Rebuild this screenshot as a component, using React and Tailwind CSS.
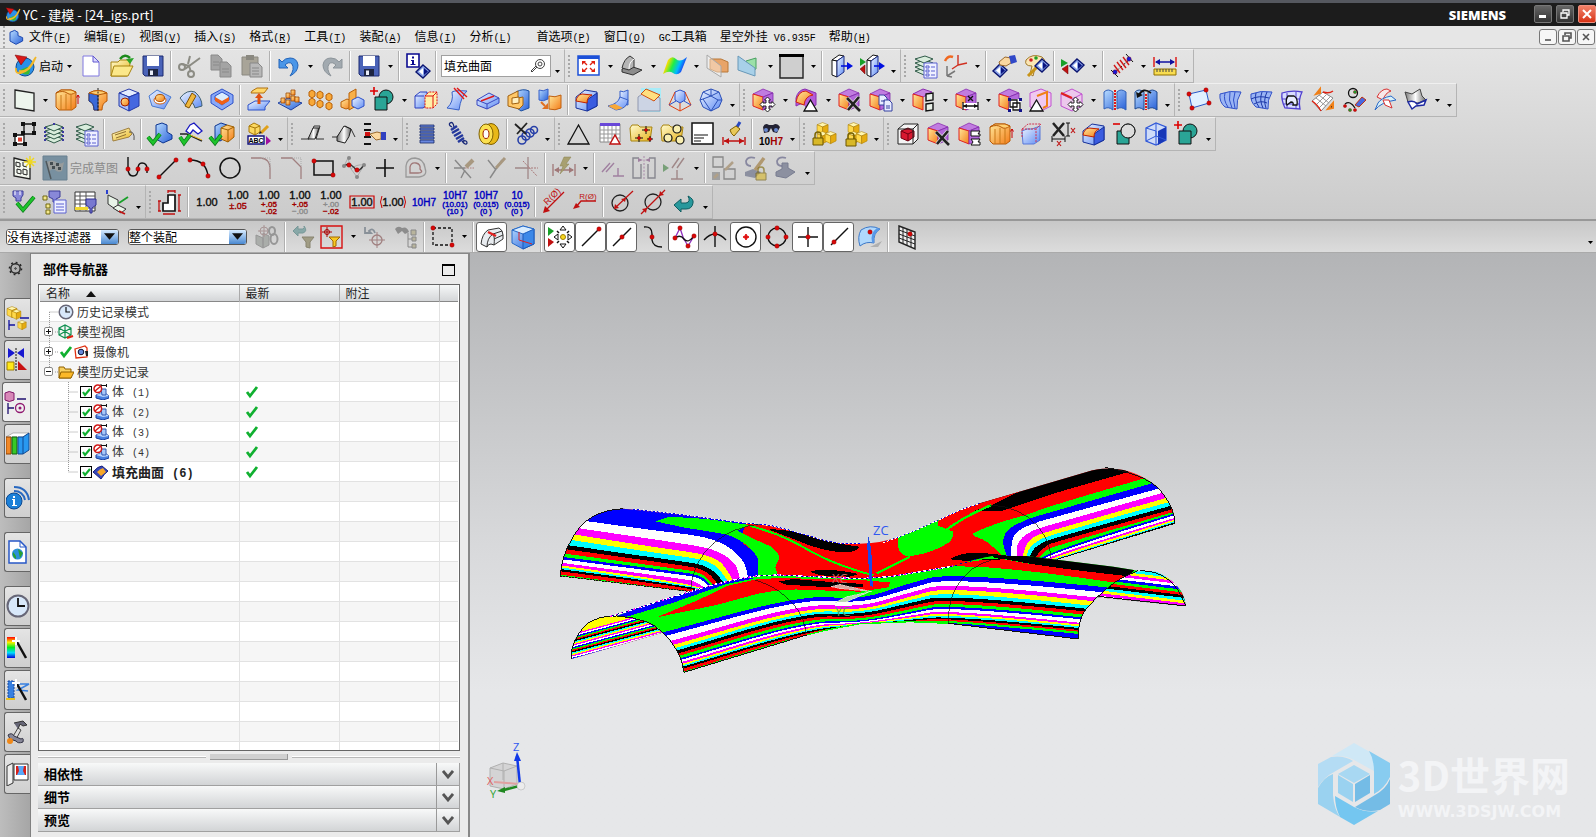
import React from 'react';

// ---------- Shared drawing parts ----------

const Gradients = () => (
  <svg width="0" height="0" className="absolute" aria-hidden="true">
    <defs>
      <linearGradient id="gBlue" x1="0" y1="0" x2="1" y2="1">
        <stop offset="0" stopColor="#f0f6ff" />
        <stop offset="1" stopColor="#5f8cf4" />
      </linearGradient>
      <linearGradient id="gDeep" x1="0" y1="0" x2="1" y2="1">
        <stop offset="0" stopColor="#b8dcff" />
        <stop offset="1" stopColor="#2860d8" />
      </linearGradient>
      <linearGradient id="gOrange" x1="0" y1="0" x2="1" y2="1">
        <stop offset="0" stopColor="#ffe89a" />
        <stop offset="1" stopColor="#f47c18" />
      </linearGradient>
      <linearGradient id="gGold" x1="0" y1="0" x2="1" y2="1">
        <stop offset="0" stopColor="#fffbd0" />
        <stop offset="1" stopColor="#e8b41c" />
      </linearGradient>
      <linearGradient id="gSilver" x1="0" y1="0" x2="1" y2="0">
        <stop offset="0" stopColor="#777" />
        <stop offset="0.5" stopColor="#fff" />
        <stop offset="1" stopColor="#666" />
      </linearGradient>
      <linearGradient id="gRainbow" x1="0" y1="0" x2="1" y2="0.3">
        <stop offset="0" stopColor="#f22" />
        <stop offset="0.25" stopColor="#fd0" />
        <stop offset="0.5" stopColor="#2e4" />
        <stop offset="0.75" stopColor="#0bf" />
        <stop offset="1" stopColor="#22e" />
      </linearGradient>
      <linearGradient id="gSpectrum" x1="0" y1="0" x2="0" y2="1">
        <stop offset="0" stopColor="#f00" />
        <stop offset="0.25" stopColor="#fe0" />
        <stop offset="0.5" stopColor="#0e2" />
        <stop offset="0.75" stopColor="#0df" />
        <stop offset="1" stopColor="#00d" />
      </linearGradient>
    </defs>
  </svg>
);

const Dot = ({ x, y, r = 2.2, c = '#d80808' }) => <circle cx={x} cy={y} r={r} fill={c} stroke="#800" strokeWidth="0.4" />;

const Cube = ({ t = '#e4ecff', l = '#a8c0fa', r = '#4668e0', s = '#2438a8', ...rest }) => (
  <g stroke={s} strokeWidth="1" strokeLinejoin="round" {...rest}>
    <path d="M12 1 22 5 12 9 2 5z" fill={t} />
    <path d="M2 5 12 9V23L2 18z" fill={l} />
    <path d="M12 9 22 5V18L12 23z" fill={r} />
  </g>
);

const EditCube = ({ children }) => (
  <>
    <path d="M11 1 21 5 11 9 1 6z" fill="#c07ce0" stroke="#8a2cb0" strokeWidth="0.8" />
    <path d="M1 6 11 9V22L1 18z" fill="url(#gOrange)" stroke="#e02020" />
    <path d="M11 9 21 5V18L11 22z" fill="#b468dc" stroke="#7d28a8" strokeWidth="0.8" />
    {children}
  </>
);

const Check = ({ d = 'M3 13 8 19 21 5', w = 4 }) => (
  <>
    <path d={d} fill="none" stroke="#0a7a18" strokeWidth={w} />
    <path d={d} fill="none" stroke="#1ec42c" strokeWidth={w - 1.4} />
  </>
);

const Cross = ({ x = 8, y = 9 }) => (
  <g transform={`translate(${x} ${y})`} stroke="#222" strokeWidth="2.6">
    <path d="M1 1 14 14M13 0 2 13" stroke="#ddd" strokeWidth="4" />
    <path d="M1 1 14 14M13 0 2 13" />
  </g>
);

const MoveCross = ({ x = 8, y = 9 }) => (
  <path
    transform={`translate(${x} ${y})`}
    d="M7.500 0 10.500 3H9V6H12V4.500L15 7.500 12 10.500V9H9V12H10.500L7.500 15 4.500 12H6V9H3V10.500L0 7.500 3 4.500V6H6V3H4.500z"
    fill="#fff"
    stroke="#222"
  />
);

const Diamond = ({ x = 0, y = 0 }) => (
  <g transform={`translate(${x} ${y})`}>
    <path d="M7 0 14 6 7 13 0 7z" fill="#8aa4e8" stroke="#0a1470" strokeWidth="1.4" />
    <path d="M7 3V10L3 6.500z" fill="#fff" />
    <path d="M8 3V10L12 6.500z" fill="#0a1480" />
  </g>
);

const Floppy = () => (
  <>
    <path d="M2 2H22V22H4L2 20z" fill="#4a63b8" stroke="#1c2a70" />
    <path d="M6 2H18V12H6z" fill="#fff" />
    <path d="M7 15H17V22H7z" fill="#1d2440" />
    <path d="M9 16.500H12V21H9z" fill="#e8ecf8" />
  </>
);

const Sheets = () => (
  <g fill="#d8ecdc" stroke="#2f5a48">
    <path d="M2 17 12 14 20 17 11 21z" />
    <path d="M2 13 12 10 20 13 11 17z" />
    <path d="M2 9 12 6 20 9 11 13z" />
    <path d="M2 5 12 2 20 5 11 9z" />
  </g>
);

const ListCard = ({ x = 11, y = 9 }) => (
  <g transform={`translate(${x} ${y})`}>
    <path d="M0 0H13V15H0z" fill="#eef0ff" stroke="#5a60d0" />
    <path d="M2 3H5V5H2zM2 7H5V9H2zM2 11H5V13H2z" fill="none" stroke="#5a60d0" />
    <path d="M7 4H11M7 8H11M7 12H11" stroke="#5a60d0" />
  </g>
);

const Extrude = () => (
  <>
    <path d="M1 5 6 2H16L21 4V19L17 22H4L1 19z" fill="url(#gOrange)" stroke="#b85a08" />
    <path d="M1 5 6 2H16L21 4Q16 8 12 5T1 5z" fill="#ffcf70" stroke="#b85a08" />
    <path d="M6 7V22M11 6V22M16 7V22" fill="none" stroke="#c87818" />
    <path d="M23 16V7M21.500 9.500 23 7 24.500 9.500" fill="none" stroke="#c00" />
  </>
);

const Unite = ({ sign }) => (
  <>
    <circle cx="15" cy="9" r="7" fill="#2aa596" stroke="#111" />
    <path d="M4 9H16V22H4z" fill="#2aa596" stroke="#111" />
    {sign === '-' && <circle cx="15" cy="9" r="7" fill="#dcdcdc" stroke="#111" />}
    <path d={sign === '+' ? 'M-1 3H7M3 -1V7' : 'M0 2H7'} stroke="#d00" strokeWidth="1.600" />
  </>
);

const Blend = () => (
  <>
    <path d="M1 9 10 2 22 4V18L12 23 1 20z" fill="url(#gBlue)" stroke="#16309a" />
    <path d="M12 12 22 5V18L12 23z" fill="#3a5ce0" stroke="#16309a" />
    <path d="M1 13Q2 7 7 6L17 7Q12 9 12 15z" fill="url(#gOrange)" stroke="#c02000" />
  </>
);

const Lock = ({ x, y }) => (
  <g transform={`translate(${x} ${y})`}>
    <path d="M2 6V3a3 3 0 0 1 6 0V6" fill="none" stroke="#7a6400" strokeWidth="1.500" />
    <path d="M0 6H10V13H0z" fill="#d8b828" stroke="#6a5400" />
  </g>
);

const gold = { t: '#fff6b0', l: '#ffd94a', r: '#e6ac10', s: '#a87a00' };

const Boxes = ({ children }) => (
  <>
    <g transform="translate(4 0) scale(.55)"><Cube {...gold} /></g>
    <g transform="translate(4 9) scale(.55)"><Cube {...gold} /></g>
    <g transform="translate(12 9) scale(.55)"><Cube {...gold} /></g>
    {children}
  </>
);

const Folder = () => (
  <path d="M1 6 3 3H9L11 5H23L21 19H2z" fill="url(#gGold)" stroke="#a88410" />
);

// A stack of dimension texts drawn in one button
const Dim = ({ rows, box, wrap }) => (
  <g fontFamily="Liberation Sans" textAnchor="middle">
    {box && <path d="M0 6H24V18H0z" fill="none" stroke="#c00" strokeWidth="1.200" />}
    {rows.map(([text, y, size, fill], i) => (
      <text key={i} x="12" y={y} fontSize={size} fill={fill} stroke={fill} strokeWidth="0.400">{text}</text>
    ))}
    {wrap && <path d="M1 6Q-2 12 1 18M23 6Q26 12 23 18" fill="none" stroke="#c00" />}
  </g>
);

const RED = '#a00000';
const DIM = '#8c8c8c';
const BLUE = '#0000c0';

// ---------- Icons ----------

const icons = {
  nx: (
    <>
      <circle cx="13" cy="13" r="9" fill="#2a90e8" stroke="#0a4a90" />
      <path d="M8 16Q11 22 17 20 20 14 15 13z" fill="#38b838" />
      <path d="M7 17Q16 19 22 6L24 3M4 14Q3 20 9 19 19 16 23 5" fill="none" stroke="#f2b82a" strokeWidth="1.800" />
      <path d="M3 1 15 3 9 11z" fill="#d81818" stroke="#700" strokeWidth="0.500" />
    </>
  ),
  new: (
    <>
      <path d="M4 2H14L20 8V22H4z" fill="#fff" stroke="#8078e0" />
      <path d="M14 2V8H20z" fill="#dcd8ff" stroke="#6058d0" />
    </>
  ),
  open: (
    <>
      <path d="M1 8H8L10 6H20V10L17 22H1z" fill="url(#gGold)" stroke="#a88410" />
      <path d="M4 12H23L18 22H1z" fill="#fbe88a" stroke="#a88410" />
      <path d="M10 5Q15 -1 20 4" fill="none" stroke="#1c8a1c" strokeWidth="2.500" />
      <path d="M16 5 24 4 20 10z" fill="#2aa52a" />
    </>
  ),
  save: <Floppy />,
  cut: (
    <g fill="none" stroke="#8c8c84" strokeWidth="2">
      <path d="M7 15 22 4M10 10 12 2M11 12 13 18M3 10 12 12" />
      <circle cx="4" cy="13" r="3" /><circle cx="13" cy="20" r="3" />
    </g>
  ),
  copy: (
    <g fill="#a4a4a4" stroke="#8a8a8a">
      <path d="M2 1H9L13 5V16H2z" /><path d="M11 8H18L22 12V23H11z" />
      <path d="M4 8H10M4 11H10M13 15H20M13 18H20" />
    </g>
  ),
  paste: (
    <>
      <path d="M2 3H18V21H2z" fill="#a8a498" stroke="#8a8880" />
      <path d="M6 1H14V6H6z" fill="#8a8880" />
      <path d="M10 9H18L22 13V23H10z" fill="#b8b8b8" stroke="#888" />
      <path d="M12 14H19M12 17H19M12 20H19" stroke="#888" />
    </>
  ),
  undo: <path d="M2 5V14H11L8 11Q12 7 15 10 18 15 13 22 21 18 21 11 20 4 13 4 8 4 5 8z" fill="#4a96e8" stroke="#2464b8" />,
  redo: <path d="M22 5V14H13L16 11Q12 7 9 10 6 15 11 22 3 18 3 11 4 4 11 4 16 4 19 8z" fill="#a2aab0" stroke="#8c949a" />,
  info: (
    <>
      <path d="M1 0H13V13H1z" fill="#fff" stroke="#0a0a90" strokeWidth="1.600" />
      <path d="M6 2.500H8V4.500H6zM5 6H8V10H9.500V11H4.500V10H6V7H5z" fill="#0a0a90" />
      <Diamond x={10} y={11} />
    </>
  ),
  fit: (
    <>
      <path d="M1 2H22V21H1z" fill="#fff" stroke="#1c50d8" strokeWidth="1.500" />
      <path d="M1 2H22V5H1z" fill="#1c50d8" />
      <path d="M10 11 7 8M13 11 16 8M10 14 7 17M13 14 16 17" stroke="#e02010" strokeWidth="1.400" />
      <path d="M5 7H9L5 11zM18 7V11L14 7zM5 18V14L9 18zM18 18H14L18 14z" fill="#e02010" />
    </>
  ),
  orient: (
    <>
      <path d="M2 15 10 12 22 16 13 21 2 18z" fill="#8c8c8c" stroke="#333" />
      <path d="M2 14Q4 5 10 2L14 5V13L9 16z" fill="#b4b4b4" stroke="#333" />
      <path d="M9 15Q9 8 14 5" fill="none" stroke="#fff" />
    </>
  ),
  rainbow: <path d="M5 6Q9 1 13 5T24 3L18 18Q14 22 10 19T0 20z" fill="url(#gRainbow)" />,
  clipOrange: (
    <>
      <path d="M4 5H15L22 8V18H11L4 15z" fill="#e8a468" stroke="#b87838" />
      <path d="M1 1V14L15 23V12z" fill="#ffffff66" stroke="#a8a8a8" />
    </>
  ),
  clipGreen: (
    <>
      <path d="M9 7 19 4V15L10 18z" fill="#9be0a8" stroke="#48a060" />
      <path d="M1 2V16L18 22V14z" fill="#a8d0e8" stroke="#6898b8" />
    </>
  ),
  swatchBar: (
    <>
      <path d="M0 2H23V24H0z" fill="#cfcfcf" stroke="#222" strokeWidth="1.400" />
      <path d="M-1 0H24V3H-1z" fill="#000" />
    </>
  ),
  door: (
    <>
      <path d="M3 6 10 1 15 2 8 7z" fill="#fff" stroke="#111" />
      <path d="M3 6 8 7V23L3 21z" fill="#fff" stroke="#111" />
      <path d="M8 7 15 2V18L8 23z" fill="url(#gBlue)" stroke="#1a2a80" />
      <path d="M12 12H20" stroke="#0010e0" strokeWidth="1.600" /><path d="M18 8 24 12 18 16z" fill="#0010e0" />
    </>
  ),
  doorGo: (
    <>
      <path d="M7 6 13 1 18 2 11 7z" fill="#fff" stroke="#111" />
      <path d="M7 6 11 7V23L7 21z" fill="#fff" stroke="#111" />
      <path d="M11 7 18 2V18L11 23z" fill="url(#gBlue)" stroke="#1a2a80" />
      <path d="M0 4 6 8 0 12z" fill="#18a028" /><path d="M5 11V20L0 15z" fill="#c01010" stroke="#600" strokeWidth="0.500" />
      <path d="M14 12H21" stroke="#0010e0" strokeWidth="1.600" /><path d="M19 8 25 12 19 16z" fill="#0010e0" />
    </>
  ),
  layers: <><Sheets /><ListCard /></>,
  layersPlain: (
    <>
      <Sheets />
      <path d="M2 5V20M20 5V20M11 1V4" stroke="#3a3aa0" strokeDasharray="2 2" strokeWidth="2" />
    </>
  ),
  wcs: (
    <>
      <path d="M3 22V12M3 22 11 17M3 22 8 23" fill="none" stroke="#777" strokeWidth="1.500" />
      <path d="M14 11V1M14 11 23 9M14 11 8 15" fill="none" stroke="#d03020" strokeWidth="1.400" />
      <path d="M1 7Q4 1 9 3" fill="none" stroke="#f06820" strokeWidth="2.500" />
    </>
  ),
  hand: (
    <>
      <Diamond x={0} y={10} />
      <path d="M6 8 12 3 18 4V9L13 12 7 11z" fill="#fbd8a0" stroke="#9a6a30" /><path d="M16 2 22 1 24 8 18 10z" fill="#3048c8" />
    </>
  ),
  palette: (
    <>
      <path d="M2 6Q8 -1 18 3 24 8 18 12 12 9 11 14L9 22 6 20 8 12Q0 12 2 6z" fill="#fbe6b4" stroke="#a07828" />
      <circle cx="7" cy="6" r="1.800" fill="#d02020" /><circle cx="12" cy="4" r="1.800" fill="#20a020" />
      <path d="M4 22 14 12" stroke="#c89418" strokeWidth="3" /><Diamond x={11} y={5} />
    </>
  ),
  play: (
    <>
      <path d="M0 5 7 9 0 13z" fill="#18a028" /><path d="M7 11V20L1 15z" fill="#c01010" stroke="#600" strokeWidth="0.500" />
      <Diamond x={9} y={5} />
    </>
  ),
  section: (
    <>
      <path d="M3 20 20 5" stroke="#111" strokeDasharray="3 1.500" />
      <path d="M4 11 10 19M7 8 13 16M10 6 16 14M13 3 19 11" stroke="#d01818" strokeWidth="1.400" />
      <path d="M1 16 8 23M16 0 23 8" stroke="#111" /><Dot x={5} y={18} c="#1818d8" /><Dot x={19} y={5} c="#1818d8" />
    </>
  ),
  measure: (
    <>
      <path d="M1 3V13M23 3V13" stroke="#d00" strokeWidth="1.300" /><path d="M3 8H21" stroke="#1010a0" strokeWidth="1.500" />
      <path d="M2 8 7 5V11zM22 8 17 5V11z" fill="#1010a0" />
      <path d="M1 15H23V21H1z" fill="#f8dc50" stroke="#907000" /><path d="M4 15V18M7 15V18M10 15V18M13 15V18M16 15V18M19 15V18" stroke="#444" />
    </>
  ),
  plane: <path d="M3 2 22 5V23L3 20z" fill="#edf5ed" stroke="#222" strokeWidth="1.300" />,
  extrude: <Extrude />,
  revolve: (
    <>
      <path d="M3 5Q12 0 21 5V13Q16 15 16 22H8Q8 15 3 13z" fill="url(#gOrange)" stroke="#b85a08" />
      <path d="M3 5 12 7V22H8Q8 15 3 13z" fill="#3c6ad8" stroke="#1a3a90" /><path d="M3 5Q12 0 21 5L12 7z" fill="#ffd070" stroke="#b85a08" /><path d="M12 0V24" stroke="#222" strokeDasharray="2 1.500" />
    </>
  ),
  hole: <><Cube /><circle cx="8" cy="14" r="4" fill="url(#gOrange)" stroke="#a02000" /></>,
  emboss: (
    <>
      <path d="M1 8 9 2 23 9 16 21 4 18z" fill="url(#gBlue)" stroke="#4878d0" /><ellipse cx="12" cy="12" rx="6" ry="4" fill="#fff" stroke="#d06010" /><ellipse cx="12" cy="10" rx="4.500" ry="3.500" fill="url(#gOrange)" stroke="#b05000" />
    </>
  ),
  wrap: (
    <>
      <path d="M1 10Q8 1 16 4 23 10 23 18L16 20Q14 13 10 14 8 16 8 19z" fill="url(#gBlue)" stroke="#406070" />
      <path d="M13 5 17 8 10 20 6 18z" fill="#f0b83c" stroke="#805000" />
    </>
  ),
  thicken: (
    <>
      <path d="M1 7 12 1 23 7V15L12 22 1 15z" fill="#88a8f8" stroke="#2c50c8" /><path d="M5 8 12 4 19 8V12L12 17 5 12z" fill="#d8ecff" stroke="#2c50c8" />
      <path d="M5 9 12 13 19 9V13L12 17 5 13z" fill="#f06018" />
    </>
  ),
  offset: (
    <>
      <path d="M5 3 10 0H21L17 5H4z" fill="#ffd86a" stroke="#b07010" /><path d="M1 17 8 13H23L18 19V22H1z" fill="url(#gBlue)" stroke="#2c50c8" />
      <path d="M12 16V9" stroke="#e05010" strokeWidth="3" /><path d="M8 10 12 5 16 10z" fill="#e05010" />
    </>
  ),
  pattern: (
    <>
      <path d="M0 15 10 10 24 15 13 22z" fill="url(#gDeep)" stroke="#2040a0" />
      {[[5, 15], [10, 10], [10, 17], [15, 13], [15, 7], [19, 14]].map(([x, y]) => (
        <path key={`${x}-${y}`} d={`M${x - 2} ${y}V${y - 5}H${x + 2}V${y}z`} fill="url(#gOrange)" stroke="#a04800" strokeWidth="0.800" />
      ))}
    </>
  ),
  patternGeo: (
    <>
      {[[0, 3], [8, 4], [17, 6], [0, 11], [8, 13], [17, 15]].map(([x, y]) => (
        <path key={`${x}-${y}`} d={`M${x} ${y + 1}L${x + 3} ${y - 1} ${x + 6} ${y + 1}V${y + 5}L${x + 3} ${y + 7} ${x} ${y + 5}z`} fill="#f8a838" stroke="#b86008" />
      ))}
    </>
  ),
  mirror: (
    <>
      <path d="M1 14 7 11 12 13V19L6 21 1 19z" fill="url(#gOrange)" stroke="#b86008" /><path d="M9 5 16 1V18L9 22z" fill="#f8b048" stroke="#b86008" />
      <path d="M12 12 18 9 24 12V18L18 21 12 18z" fill="url(#gBlue)" stroke="#2c50c8" />
    </>
  ),
  unite: <Unite sign="+" />,
  subtract: <Unite sign="-" />,
  trimBody: (
    <>
      <path d="M1 8 6 4H13V17L9 20H1z" fill="url(#gBlue)" stroke="#2c40c0" /><path d="M1 8H10" stroke="#2c40c0" />
      <path d="M11 8 15 4H23V16L19 20H11z" fill="#fff0a8" stroke="#e01010" strokeDasharray="2 1" /><path d="M11 8H19V20M19 8 23 4" fill="none" stroke="#e01010" />
    </>
  ),
  trimSheet: (
    <>
      <path d="M7 4Q10 2 22 3 16 8 14 22L2 20Q9 14 7 4z" fill="url(#gBlue)" stroke="#3860c8" />
      <path d="M9 0 19 11M12 0 22 9" stroke="#e01818" strokeWidth="1.400" />
    </>
  ),
  split: (
    <>
      <path d="M1 12 13 5 23 10V15L11 21 1 17z" fill="url(#gBlue)" stroke="#3848c0" /><path d="M1 12 11 16 23 10M11 16V21" fill="none" stroke="#3848c0" />
      <path d="M5 13 18 8" stroke="#e01818" strokeWidth="1.400" />
    </>
  ),
  shell: (
    <>
      <path d="M9 4Q16 0 22 3V20L14 23 10 20z" fill="url(#gDeep)" stroke="#1c50a0" /><path d="M1 8 11 3V10L16 9V17L12 21 1 18z" fill="#ffc868" stroke="#a06010" />
      <path d="M5 10 12 9V15L5 16z" fill="#fff0c0" stroke="#a06010" />
    </>
  ),
  moveSheet: (
    <>
      <path d="M1 2Q5 4 10 1V11Q5 14 1 12z" fill="url(#gDeep)" stroke="#3860c8" /><path d="M11 8Q17 10 23 7V20Q17 23 11 21z" fill="url(#gOrange)" stroke="#c06010" />
      <path d="M3 14 7 18" stroke="#e07020" strokeWidth="2" /><path d="M10 15V21H4z" fill="#e07020" />
    </>
  ),
  blend: <Blend />,
  flange: (
    <>
      <path d="M14 3Q17 5 22 2V17L14 16z" fill="url(#gBlue)" stroke="#3860c8" /><path d="M14 9Q12 16 2 18L10 22Q21 21 22 12z" fill="url(#gBlue)" stroke="#3860c8" />
      <path d="M2 18 10 22 17 20 9 16z" fill="#f8a838" />
    </>
  ),
  chamfer: (
    <>
      <path d="M4 0H24V24H4z" fill="#a8ecf8" /><path d="M1 9 8 4 23 10V23H1z" fill="#ccd4e4" stroke="#9098b0" />
      <path d="M4 6 9 1 23 7 17 13z" fill="#ffe080" stroke="#d05010" />
    </>
  ),
  draft: (
    <>
      <path d="M7 4 12 2 17 4V12L12 15 7 12z" fill="url(#gBlue)" stroke="#2c50c8" />
      <path d="M7 4 1 17 12 23 23 17 17 4M12 15V23" fill="none" stroke="#e04010" /><path d="M1 17 8 13M23 17 16 13" stroke="#2c50c8" />
    </>
  ),
  polyBody: (
    <>
      <path d="M12 1 20 4 23 12 20 19 12 23 4 19 1 12 4 4z" fill="url(#gBlue)" stroke="#2c50b8" />
      <path d="M12 1V8L4 11 1 12M12 8 19 12 23 12M4 11 12 23 19 12M4 4 12 8 20 4" fill="none" stroke="#2c50b8" />
    </>
  ),
  editMove: <EditCube><MoveCross /></EditCube>,
  editBlend: (
    <>
      <path d="M1 10Q3 2 10 1L21 5V17L12 22Q10 12 1 18z" fill="#b45cd8" stroke="#8a2cb0" />
      <path d="M1 14Q3 3 11 3L18 7Q10 8 9 17z" fill="url(#gOrange)" stroke="#d02010" /><path d="M9 23 15.500 12 22 23z" fill="#fff" stroke="#111" strokeWidth="1.300" />
    </>
  ),
  editDelete: <EditCube><Cross /></EditCube>,
  editCopy: (
    <EditCube>
      <g fill="#e8ecff" stroke="#3440a0"><path d="M10 7H15L18 10V17H10z" /><path d="M15 12H20L23 15V23H15z" /><path d="M12 13H16M17 18H21M17 20H21" /></g>
    </EditCube>
  ),
  editGroup: (
    <>
      <path d="M1 6 11 1 20 4 11 9z" fill="#c884e0" stroke="#8a2cb0" /><path d="M1 6 11 9V22L1 18z" fill="url(#gOrange)" stroke="#e02020" />
      <path d="M14 6 21 5V12L14 13zM14 16 21 15V22L14 23z" fill="#e8f0e8" stroke="#111" strokeWidth="1.400" />
    </>
  ),
  editDist: (
    <EditCube>
      <path d="M7 18H24" stroke="#fff" strokeWidth="6" /><path d="M8 14V22M23 14V22M8 18H23M13 8 18 13M18 8 13 13" stroke="#111" strokeWidth="1.300" />
      <path d="M8 18 12 16V20zM23 18 19 16V20z" fill="#111" />
    </EditCube>
  ),
  editSelect: (
    <EditCube>
      <path d="M11 11H23V23H11z" fill="#fff" /><path d="M12 12H19V19H12zM15 15H22V22H15z" fill="none" stroke="#111" strokeWidth="1.300" />
      <path d="M10 10H13V13H10zM21 10H24V13H21zM10 21H13V24H10zM21 21H24V24H21z" fill="#10108a" />
    </EditCube>
  ),
  editFace: (
    <>
      <path d="M1 5 12 1 22 5V18L12 23 1 19z" fill="#f0c8f0" stroke="#c050d0" /><path d="M8 8 18 4V18L14 20" fill="none" stroke="#f08018" strokeWidth="2" />
      <path d="M1 23 7.500 12 14 23z" fill="#fff" stroke="#111" strokeWidth="1.300" />
    </>
  ),
  editEdge: (
    <>
      <path d="M1 6 12 1 22 6V18L12 23 1 18z" fill="#ecc8ec" stroke="#c050d0" /><path d="M1 6 12 11 22 6" fill="none" stroke="#c050d0" />
      <path d="M1 5 12 10" stroke="#e02020" strokeWidth="2" /><MoveCross />
    </>
  ),
  sheetPair: (
    <>
      <path d="M1 4Q5 0 10 4V22Q5 18 1 21zM14 4Q18 0 23 4V22Q18 18 14 21z" fill="url(#gDeep)" stroke="#3060b8" /><path d="M12 2V22" stroke="#e01818" strokeWidth="2" strokeDasharray="2 1" />
    </>
  ),
  sheetTurn: (
    <>
      <path d="M1 4Q5 0 10 4V22Q5 18 1 21zM14 4Q18 0 23 4V22Q18 18 14 21z" fill="url(#gDeep)" stroke="#1c4890" /><path d="M12 6V22" stroke="#e01818" strokeWidth="2" strokeDasharray="2 1" />
      <path d="M5 7Q9 -1 17 5" fill="none" stroke="#111" strokeWidth="1.800" /><path d="M2 4 9 7 3 10z" fill="#111" />
    </>
  ),
  fourPoint: (
    <>
      <path d="M2 6 19 2 22 15 5 20z" fill="#e0f0ff" stroke="#2858c8" /><Dot x={2} y={6} /><Dot x={19} y={2} /><Dot x={22} y={15} /><Dot x={5} y={20} />
    </>
  ),
  ruled: (
    <>
      <path d="M2 6Q12 2 23 4Q18 12 19 21L7 19Q1 14 2 6z" fill="#9ab4f4" stroke="#3050c8" /><path d="M7 5Q5 12 10 19M12 4Q10 12 14 20M17 4Q14 12 17 20" fill="none" stroke="#3050c8" />
    </>
  ),
  mesh: (
    <>
      <path d="M2 6Q12 2 23 4Q18 12 19 21L7 19Q1 14 2 6z" fill="#9ab4f4" stroke="#3050c8" />
      <path d="M7 5Q5 12 10 19M13 4Q10 12 14 20M18 4Q14 12 17 20M2 11Q10 7 20 10M5 16Q12 12 18 15" fill="none" stroke="#1c38a8" />
    </>
  ),
  nSide: (
    <>
      <path d="M2 5Q12 2 22 4Q18 12 20 21L5 20Q1 12 2 5z" fill="#d8dcff" stroke="#5040d0" strokeWidth="1.300" /><path d="M7 5V20M16 4V20M2 11H20M4 16H19" stroke="#5040d0" />
      <path d="M8 8H14Q18 10 17 17H13Q14 14 11 14L7 17Q5 12 8 8z" fill="#e8ecff" stroke="#111" strokeWidth="1.300" />
    </>
  ),
  extend: (
    <>
      <path d="M1 13 12 4 22 10 10 23z" fill="#fff" stroke="#888" /><path d="M5 10 15 18M8 7 18 15M5 17 15 7M8 20 19 9" stroke="#999" /><path d="M1 13Q6 16 10 23M12 4Q18 6 22 3" fill="none" stroke="#e02010" strokeWidth="1.400" />
      <path d="M5 6 9 1V5zM17 21 22 15V20z" stroke="#f08018" strokeWidth="2" />
    </>
  ),
  studio: (
    <>
      <circle cx="11" cy="5" r="4.500" fill="none" stroke="#111" strokeWidth="1.300" /><path d="M3 16Q8 12 13 20" fill="none" stroke="#111" strokeWidth="1.300" />
      <Dot x={13} y={4} c="#18a028" r={1.600} /><Dot x={3} y={18} r={1.600} /><Dot x={8} y={22} c="#18a028" r={1.600} /><Dot x={13} y={22} r={1.600} />
      <path d="M13 17 20 9 24 12 17 19z" fill="#4868e0" stroke="#c03010" />
    </>
  ),
  sweepSurf: (
    <>
      <path d="M4 9Q8 1 14 1L18 3Q12 5 10 12z" fill="#f8e8e8" stroke="#d83030" /><path d="M2 22Q8 14 23 12L18 8Q8 10 5 15z" fill="#d8f0f8" stroke="#2868c8" />
      <path d="M10 12 12 17 19 20 16 12z" fill="#fff" stroke="#d83030" />
    </>
  ),
  book: (
    <>
      <path d="M1 4 8 6 16 1 18 8 22 12 14 15 4 14z" fill="url(#gSilver)" stroke="#444" /><path d="M4 14Q10 12 13 16L22 12 20 17 12 18 8 21z" fill="#fff" stroke="#1c28a0" strokeWidth="1.500" />
    </>
  ),
  assembly: (
    <>
      <path d="M12 2H22V12H12z" fill="#d8d8d8" stroke="#111" strokeWidth="1.300" /><path d="M3 13H12V22H3z" fill="#fff" stroke="#111" strokeWidth="1.300" /><path d="M6 15.500H10V19.500H6z" fill="#e04030" />
      <path d="M9 0H13V4H9zM20 0H24V4H20zM9 9H13V13H9zM20 9H24V13H20zM1 11H5V15H1zM1 20H5V24H1zM11 20H15V24H11z" fill="#111" />
    </>
  ),
  tag: (
    <>
      <path d="M1 12 18 6 21 12 18 15 2 19z" fill="url(#gGold)" stroke="#a08040" /><path d="M4 13 15 9.500M5 16 15 12.500" stroke="#907030" /><path d="M18 10Q24 9 23 18" fill="none" stroke="#555" />
    </>
  ),
  bodyCheck: (
    <>
      <path d="M8 3 14 1 19 3V10L24 13V17L15 21 8 17z" fill="url(#gDeep)" stroke="#0c3490" /><Check d="M0 15 5 21 12 12" />
    </>
  ),
  editCheck: (
    <>
      <path d="M11 3 15 1 23 9 19 12 14 8 11 12 7 9z" fill="#fff" stroke="#1818c0" strokeWidth="1.300" /><path d="M1 12H8M8 12 23 19" stroke="#222" strokeWidth="1.600" /><path d="M9 12 23 18" stroke="#f0c020" />
      <Check d="M1 15 5 21 11 13" />
    </>
  ),
  boxCheck: (
    <>
      <path d="M5 4 11 1 17 3V15L10 19 5 17z" fill="url(#gDeep)" stroke="#0c3490" /><path d="M11 6 17 3 24 5V15L18 20 11 17z" fill="url(#gOrange)" stroke="#a06000" /><path d="M11 6 18 8 24 5M18 8V20" fill="none" stroke="#a06000" /><Check d="M0 15 5 21 11 13" />
    </>
  ),
  abc: (
    <>
      <path d="M2 4 7 1 13 4V10L8 13 2 10z" fill="#fbd860" stroke="#a87808" /><path d="M2 4 8 6 13 4M8 6V13" fill="none" stroke="#a87808" /><path d="M14 11 21 4" stroke="#e0a018" strokeWidth="3" /><path d="M12 12 15 11 13 9z" fill="#222" />
      <path d="M1 14H17V22H1z" fill="#fff" stroke="#101080" strokeWidth="1.400" /><text x="9" y="21" fontSize="7" textAnchor="middle" fontWeight="bold" fontFamily="Liberation Sans">ABC</text><path d="M19 14 24 19 19 23z" fill="#a010a0" />
    </>
  ),
  beamA: (
    <><path d="M1 17H9L14 4H20L16 17H24" fill="none" stroke="#333" /><path d="M8 17 13 6H19L15 17z" fill="url(#gSilver)" stroke="#222" /></>
  ),
  beamB: (
    <><path d="M1 15H6L14 4 20 7 24 15" fill="none" stroke="#333" /><path d="M6 15 13 4 20 7Q19 15 14 21L6 19z" fill="url(#gSilver)" stroke="#222" /></>
  ),
  pick: (
    <>
      <path d="M2 2H9M2 8H9M2 15H9M2 22H9" stroke="#111" strokeWidth="2.200" /><path d="M3 10H8V14H3z" fill="#d01010" />
      <path d="M8 12 15 10 19 11V17L14 18z" fill="#fbd8a0" stroke="#9a6a30" /><path d="M19 10H24V18H19z" fill="#3040c0" />
    </>
  ),
  spring: (
    <path d="M5 3H19V5H5zM5 6H19V8H5zM5 9H19V11H5zM5 12H19V14H5zM5 15H19V17H5zM5 18H19V21H5z" fill="#6a88e0" stroke="#182868" strokeWidth="0.800" />
  ),
  springTension: (
    <>
      <path d="M6 5Q2 3 4 1 7 -1 8 5M16 19Q20 24 21 21 21 18 17 19" fill="none" stroke="#182878" strokeWidth="1.300" />
      <path d="M5 8 11 4M6 11 13 7M8 14 15 10M10 17 17 13M12 20 18 16" stroke="#24389c" strokeWidth="2.500" />
    </>
  ),
  coil: (
    <>
      <ellipse cx="14" cy="12" rx="8" ry="10.500" fill="#e8b818" stroke="#806000" /><ellipse cx="9" cy="12" rx="7" ry="10" fill="#fbe050" stroke="#806000" /><ellipse cx="9" cy="12" rx="3" ry="4.500" fill="#fff" stroke="#a02000" />
    </>
  ),
  springCut: (
    <>
      <g fill="none" stroke="#2840a8" strokeWidth="1.600"><circle cx="8" cy="18" r="4" /><circle cx="12" cy="14" r="4" /><circle cx="16" cy="11" r="4" /><circle cx="20" cy="8" r="3.500" /></g>
      <path d="M1 2 12 12M13 1 3 12" stroke="#222" strokeWidth="1.800" />
    </>
  ),
  triangle: <path d="M1 22 11.500 3 22 22z" fill="none" stroke="#111" strokeWidth="1.300" />,
  sheetTable: (
    <>
      <path d="M2 2H22V20H2z" fill="#fff" stroke="#888" /><path d="M2 1H22V4H2z" fill="#6a48d8" /><path d="M2 8H22M2 12H22M2 16H22M6 4V20M10 4V20M14 4V20M18 4V20" stroke="#999" />
      <path d="M12 22 17 13 22 22z" fill="#fff" stroke="#c01010" strokeWidth="1.400" />
    </>
  ),
  folderPts: <><Folder /><path d="M13 8H21M17 4V12M6 16H14M10 12V20M18 17H24M21 14V20" stroke="#111" /><Dot x={17} y={8} r={1.600} /><Dot x={10} y={16} r={1.600} /><Dot x={21} y={17} r={1.600} /></>,
  folderCirc: <><Folder /><g fill="#f8eeb0" stroke="#111" strokeWidth="1.200"><circle cx="17" cy="7" r="4" /><circle cx="8" cy="16" r="4" /><circle cx="20" cy="18" r="4" /></g></>,
  note: <><path d="M1 1H22V22H1z" fill="#fff" stroke="#111" strokeWidth="1.500" /><path d="M3 13H17M3 16H13M3 19H10" stroke="#111" strokeWidth="1.200" /></>,
  brush: (
    <>
      <path d="M15 5 18 0" stroke="#2848c0" strokeWidth="3" /><path d="M8 8 14 4 18 7 12 14Q9 12 8 8z" fill="#e8c858" stroke="#806000" />
      <path d="M1 15V23M23 15V23M2 19H22" stroke="#c01010" strokeWidth="1.400" /><path d="M2 19 7 16V22zM22 19 17 16V22z" fill="#c01010" />
    </>
  ),
  findFit: (
    <>
      <path d="M4 5Q6 0 10 3H14Q18 0 21 5L18 11 14 10 12 6 10 10 5 11z" fill="#223" /><circle cx="7" cy="8" r="2" fill="#6888d0" /><circle cx="17" cy="8" r="2" fill="#6888d0" />
      <text x="12" y="23" fontSize="10" fontWeight="bold" textAnchor="middle" fontFamily="Liberation Sans">10<tspan fill={RED}>H7</tspan></text>
    </>
  ),
  lockBoxes: <Boxes><Lock x={1} y={10} /></Boxes>,
  unlockBoxes: <Boxes><Lock x={3} y={11} /></Boxes>,
  redCube: (
    <>
      <path d="M2 7 8 2H22V17L17 22H2z" fill="#f4f4f4" stroke="#222" /><path d="M5 9 12 6 18 9V15L12 19 5 16z" fill="#d81830" stroke="#700010" /><path d="M5 9 12 12 18 9M12 12V19" fill="none" stroke="#700010" />
      <path d="M2 7H17V22M17 7 22 2" fill="none" stroke="#222" />
    </>
  ),
  editNote: <EditCube><path d="M13 9H22L20 12H22V14H13zM13 17H22L20 20H22V23H13L15 20z" fill="#fff" stroke="#111" /></EditCube>,
  boxGhost: (
    <>
      <path d="M2 9Q7 6 12 7L20 4V18L14 22H3z" fill="url(#gBlue)" stroke="#5878d8" /><path d="M2 7 8 2H21L16 7V20M2 7H16M2 7V16" fill="none" stroke="#d03050" strokeDasharray="2 1" />
    </>
  ),
  dimX: (
    <>
      <path d="M2 1 13 14M13 1 2 14" stroke="#222" strokeWidth="2.500" /><path d="M15 1H19M15 14H19M17 1V14M1 14V20M14 14V20M1 17H14" stroke="#111" fill="none" />
      <path d="M20 6 24 11M24 6 20 11M6 19 10 24M10 19 6 24" stroke="#c01818" strokeWidth="1.200" />
    </>
  ),
  blueWire: (
    <><path d="M2 6 12 1 22 5V18L12 23 2 19z" fill="#cfdcf8" stroke="#3058d8" strokeWidth="1.300" /><path d="M14 9 22 5V18L14 23z" fill="#1838b8" /><path d="M2 6 12 9V23M12 1V14L2 19M12 14 22 18" fill="none" stroke="#3058d8" /></>
  ),
  sketch: (
    <>
      <path d="M2 2 18 6V23L2 20z" fill="#f4f8f0" stroke="#222" strokeWidth="1.300" /><path d="M4 6 8 7V11L4 10zM5 13 9 14V18L5 17zM11 13 15 14V19L11 18zM11 6V10L15 11" fill="none" stroke="#222" />
      <path d="M18 0V12M12 6H24M14 2 22 10M22 2 14 10" stroke="#f0d820" strokeWidth="1.500" />
    </>
  ),
  flag: (
    <>
      <path d="M0 0H24V24H0z" fill="#7890a0" stroke="#688090" /><path d="M4 6Q9 3 13 6T21 6L19 15Q15 17 12 14T6 16z" fill="#989c9c" /><path d="M7 6H10V9H7zM13 7H16V10H13zM9 10H12V13H9zM15 11H18V14H15z" fill="#444c50" />
      <path d="M3 5 8 23" stroke="#50585c" strokeWidth="1.500" />
    </>
  ),
  profile: <><path d="M3 1V12Q3 20 8 20 13 20 13 13 13 7 17 7 22 7 22 13V17" fill="none" stroke="#111" strokeWidth="1.400" /><Dot x={3} y={13} /><Dot x={13} y={13} /><Dot x={22} y={13} /></>,
  line: <><path d="M3 21 20 4" stroke="#111" strokeWidth="1.400" /><Dot x={3} y={21} /><Dot x={20} y={4} /></>,
  endPoint: <><path d="M3 21 20 4" stroke="#111" strokeWidth="1.400" /><Dot x={20} y={4} /></>,
  arc: <><path d="M3 4Q19 4 21 20" fill="none" stroke="#111" strokeWidth="1.400" /><Dot x={3} y={4} /><Dot x={16} y={8} /><Dot x={21} y={20} /></>,
  circle: <circle cx="12" cy="12" r="10" fill="none" stroke="#111" strokeWidth="1.500" />,
  fillet: <><path d="M2 2H12Q21 3 21 12V23" fill="none" stroke="#a08080" strokeWidth="1.300" /><path d="M12 2H21V12" fill="none" stroke="#aaa" strokeDasharray="1 1" /></>,
  chamferLine: <><path d="M1 2H12L21 11V23" fill="none" stroke="#a08080" strokeWidth="1.300" /><path d="M12 2H21V11" fill="none" stroke="#aaa" strokeDasharray="1 1" /></>,
  rect: <><path d="M3 5H22V19H3z" fill="none" stroke="#111" strokeWidth="1.500" /><Dot x={3} y={5} /><Dot x={22} y={19} /></>,
  spline: <><path d="M2 10 6 2 9 13Q14 8 22 9L15 21 9 13" fill="none" stroke="#aaa" /><path d="M2 10Q6 7 9 9T14 14 22 9" fill="none" stroke="#333" strokeWidth="1.400" /><g fill="#888"><circle cx="2" cy="10" r="2" /><circle cx="7" cy="2" r="2" /><circle cx="22" cy="9" r="2" /><circle cx="15" cy="21" r="2" /></g><Dot x={7} y={9} /><Dot x={15} y={14} /></>,
  point: <path d="M12 3V21M3 12H21" stroke="#111" strokeWidth="1.600" />,
  offsetCurve: <><path d="M2 21V10Q3 2 11 2 20 3 21 12 24 20 15 21z" fill="none" stroke="#999" strokeWidth="1.300" /><path d="M6 17V11Q7 6 12 7T16 13Q20 17 14 17z" fill="none" stroke="#a07878" strokeWidth="1.300" /></>,
  trimA: <><path d="M2 4 18 22M12 14 8 22M1 12H12" stroke="#888" strokeWidth="1.400" /><path d="M12 12H21" stroke="#b08080" strokeDasharray="1.500 1" /><path d="M13 11 20 4" stroke="#a89880" strokeWidth="4" /></>,
  trimB: <><path d="M4 4 12 14M18 4 6 22" stroke="#888" strokeWidth="1.400" /><path d="M12 12 21 2" stroke="#a89880" strokeWidth="3" /></>,
  corner: <><path d="M13 1V23M0 12H13" stroke="#a08888" strokeWidth="1.300" /><path d="M13 12H23M8 5 22 20" stroke="#a87878" strokeDasharray="2 1" /></>,
  autoDim: <><path d="M1 8V20M23 8V20M3 14H21" stroke="#a07878" strokeWidth="1.300" /><path d="M2 14 7 11V17zM22 14 17 11V17z" fill="#a07878" /><path d="M12 1H19L14 8H17L8 18 11 10H8z" fill="#a8a070" stroke="#8a8250" strokeWidth="0.500" /></>,
  perp: <><path d="M1 16 9 7M5 16 13 7M12 20H23M17 12V20" stroke="#a080a0" strokeWidth="1.400" /></>,
  sym: <><path d="M7 2H1V22H9V8M16 8V22H23V2H17" fill="none" stroke="#888890" strokeWidth="1.400" /><path d="M12 0V24" stroke="#a888a8" strokeDasharray="2 1.500" /><path d="M6 2 11 4 6 6zM18 2 13 4 18 6z" fill="#a080a0" /></>,
  autoCon: <><path d="M0 8 6 12 0 16z" fill="#78a078" /><path d="M9 12 16 2M14 12 21 2M8 23H20M14 14V23" stroke="#a08888" strokeWidth="1.400" /></>,
  conA: <><path d="M1 1H11V11H1zM12 13H23V23H12z" fill="none" stroke="#888" strokeWidth="1.300" /><path d="M0 16H8V24H0z" fill="#a0a0a0" /><path d="M2 22 6 18M13 14 21 6" stroke="#b0a088" strokeWidth="2.500" /></>,
  conB: <><path d="M12 2Q5 0 3 5 3 10 8 10" fill="none" stroke="#8888a0" strokeWidth="1.800" /><path d="M2 16 10 13 18 16 12 22 2 20z" fill="#8c90a0" /><path d="M12 14 21 2" stroke="#b09870" strokeWidth="3.500" /><g opacity="0.600"><Lock x={13} y={11} /></g></>,
  conC: <><path d="M12 2Q5 0 3 5 3 10 8 10" fill="none" stroke="#8888a0" strokeWidth="1.800" /><path d="M2 16 8 13V7H14V12L21 16 12 22 2 20z" fill="#8c90a0" stroke="#787c90" /></>,
  qCheck: <><path d="M1 1H11V5L9 8V11H4V8L1 6z" fill="#8888d8" stroke="#3c3c98" /><path d="M3 1V5M8 1V5" stroke="#fff" /><Check d="M5 13 11 20 22 7" /></>,
  qTree: <><path d="M6 1H17V7L13 9V12H10V9L6 7z" fill="#8888d8" stroke="#3c3c98" /><path d="M0 6H4V10H0zM3 14H7V18H3zM3 20H7V24H3z" fill="#f4e88c" stroke="#706810" /><path d="M11 10H23V23H11z" fill="#eef0ff" stroke="#5a60d0" /><path d="M13 14H21M13 17H21M13 20H21" stroke="#5a60d0" /></>,
  qTable: <><path d="M1 2H21V21H1z" fill="#fff" stroke="#333" /><path d="M1 6H21M1 10H21M1 14H21M1 18H21M6 2V21M12 2V21" stroke="#555" /><path d="M1 17H14V20H1z" fill="#f0d830" /><path d="M12 9H22V15L18 18V23H16V18L12 15z" fill="#7878d0" stroke="#303090" /></>,
  axes: <><path d="M3 5 13 10V21L3 14z" fill="#e8f4e8" stroke="#333" /><path d="M13 15 21 19 16 23 8 18z" fill="#e8f4e8" stroke="#333" /><path d="M2 4V0" stroke="#1830d0" strokeWidth="1.800" /><path d="M14 13 23 7" stroke="#18a028" strokeWidth="1.800" /><path d="M14 21 20 24" stroke="#c01010" strokeWidth="1.800" /></>,
  dimRapid: <><path d="M5 21V13H10V5H17V21z" fill="#fff" stroke="#111" strokeWidth="1.700" /><path d="M10 1H17M5 24H17M1 11V21M21 5V21M0 11H3M0 21H3M20 5H23M20 21H23M10 0V3M17 0V3" stroke="#c01010" strokeWidth="1.300" /></>,
  d1: <Dim rows={[['1.00', 16, 11, '#111']]} />,
  d2: <Dim rows={[['1.00', 9, 11, '#111'], ['±.05', 19, 9, RED]]} />,
  d3: <Dim rows={[['1.00', 9, 11, '#111'], ['+.05', 17, 8, RED], ['−.02', 24, 8, RED]]} />,
  d4: <Dim rows={[['1.00', 9, 11, '#111'], ['+.05', 17, 8, RED], ['−.00', 24, 8, DIM]]} />,
  d5: <Dim rows={[['1.00', 9, 11, '#111'], ['+.00', 17, 8, DIM], ['−.02', 24, 8, RED]]} />,
  d6: <Dim box rows={[['1.00', 16, 11, '#111']]} />,
  d7: <Dim wrap rows={[['1.00', 16, 11, '#111']]} />,
  d8: <Dim rows={[['10H7', 16, 10, BLUE]]} />,
  d9: <Dim rows={[['10H7', 9, 10, BLUE], ['(10.01)', 17, 8, BLUE], ['(10   )', 24, 8, BLUE]]} />,
  d10: <Dim rows={[['10H7', 9, 10, BLUE], ['(0.015)', 17, 8, BLUE], ['(0     )', 24, 8, BLUE]]} />,
  d11: <Dim rows={[['10', 9, 10, BLUE], ['(0.015)', 17, 8, BLUE], ['(0     )', 24, 8, BLUE]]} />,
  radA: <><path d="M22 2 3 21" stroke="#c01010" strokeWidth="1.300" /><path d="M1 23 3 16 8 21z" fill="#c01010" /><text x="3" y="14" fontSize="9" fill="#c01010" fontFamily="Liberation Sans" transform="rotate(-45 6 12)">R(Ø)</text></>,
  radB: <><path d="M23 11H8L3 17" fill="none" stroke="#c01010" strokeWidth="1.300" /><path d="M0 19 3 13 7 17z" fill="#c01010" /><text x="15" y="9" fontSize="8" textAnchor="middle" fill="#c01010" fontFamily="Liberation Sans">R(Ø)</text></>,
  diaA: <><circle cx="10" cy="13" r="8" fill="none" stroke="#222" strokeWidth="1.300" /><path d="M5 18 23 1" stroke="#c01010" strokeWidth="1.200" /><path d="M4 19 5 14 9 18zM16 8 11 9 15 12z" fill="#c01010" /></>,
  diaB: <><circle cx="12" cy="12" r="8" fill="none" stroke="#222" strokeWidth="1.300" /><path d="M0 24 24 0" stroke="#c01010" strokeWidth="1.200" /><path d="M6 18 1 19 5 23zM18 6 19 1 23 5z" fill="#c01010" /></>,
  back: <path d="M2 15 9 9V13H14Q19 12 16 6 22 9 21 13 20 19 14 19H9V22z" fill="#28989c" stroke="#105c60" />,
  links: <g opacity="0.800"><path d="M1 10 8 13V23L1 19zM8 8 14 11V20L8 23z" fill="#a0a4a0" stroke="#888" /><circle cx="9" cy="6" r="4" fill="none" stroke="#a08888" /><path d="M9 0V12M3 6H15" stroke="#a08888" /><ellipse cx="17" cy="6" rx="3" ry="4" fill="none" stroke="#888" strokeWidth="2" /><ellipse cx="19" cy="14" rx="3.500" ry="5" fill="none" stroke="#888" strokeWidth="2" /></g>,
  filterBack: <><path d="M1 6 6 1V4H11Q13 3 12 1 16 6 11 8H6V11z" fill="#88a8a8" stroke="#789898" /><path d="M10 12H22L18 17V23L14 22V17z" fill="#a09c84" stroke="#888470" /></>,
  filter: <><path d="M0 1H21V23H0z" fill="none" stroke="#d81010" strokeWidth="1.400" /><circle cx="6" cy="7" r="2.500" fill="none" stroke="#a00" /><path d="M6 2V12M1 7H11" stroke="#a00" /><path d="M8 12H19L15 16V21L12 22V16z" fill="#f8c820" stroke="#a06800" /></>,
  undoTarget: <><path d="M2 2V8H8L6 6Q10 2 12 8" fill="none" stroke="#889098" strokeWidth="1.800" /><circle cx="14" cy="15" r="5" fill="none" stroke="#a08080" strokeWidth="1.300" /><path d="M14 7V23M6 15H22" stroke="#a08080" /></>,
  findTree: <><path d="M1 4Q4 0 8 3 13 1 15 7L11 9 8 6 4 9z" fill="#8c8c8c" /><path d="M14 8V22H18M14 14H18" fill="none" stroke="#888" /><path d="M17 5H22V10H17zM18 12H22V16H18zM18 19H22V23H18z" fill="#b8b49c" stroke="#888" /></>,
  selRect: <><path d="M2 3H21V20H2z" fill="none" stroke="#111" strokeWidth="1.300" strokeDasharray="3 2" /><Dot x={2} y={3} /><Dot x={21} y={20} /></>,
  snapFace: <><path d="M1 19Q2 9 8 5L19 3Q23 5 23 10V14L14 20 11 19Q8 19 7 22z" fill="#e8ecf0" stroke="#333" /><path d="M7 22Q7 13 13 9L22 6M13 9Q15 12 14 20M14 14 23 10" fill="none" stroke="#333" /><path d="M8 7 16 11" stroke="#e02020" strokeWidth="2.500" /></>,
  blueBox: <><path d="M1 5 12 1 23 4V19L12 24 1 18z" fill="url(#gDeep)" stroke="#2468c8" /><path d="M12 9 23 4V19L12 24z" fill="#3c88e8" stroke="#1c58b8" /><path d="M1 5 12 1 23 4 12 9z" fill="#d8ecff" stroke="#2468c8" /><path d="M8 7V15L21 19" fill="none" stroke="#e02020" /></>,
  snapPts: <><path d="M0 2 6 6 0 11z" fill="#18a028" /><path d="M0 13 6 17 0 22z" fill="#c01010" /><circle cx="15" cy="12" r="2.500" fill="#f8d820" stroke="#a08000" /><path d="M15 1 18 5H12zM15 23 18 19H12zM6 12 10 9V15zM24 12 20 9V15z" fill="#fff" stroke="#111" /><path d="M9 6 11 8M21 6 19 8M9 18 11 16M21 18 19 16" stroke="#111" strokeWidth="1.500" /></>,
  midPoint: <><path d="M3 21 21 3" stroke="#111" strokeWidth="1.400" /><Dot x={12} y={12} /></>,
  sCurve: <><path d="M3 2Q11 1 11 9V15Q12 22 21 22" fill="none" stroke="#111" strokeWidth="1.400" /><Dot x={11} y={12} /></>,
  poles: <><path d="M3 13 8 3 12 15M22 11 16 21 12 14" fill="none" stroke="#9030c0" strokeWidth="1.300" /><path d="M3 13Q8 9 12 14T22 11" fill="none" stroke="#111" strokeWidth="1.300" /><Dot x={3} y={13} /><Dot x={8} y={3} /><Dot x={22} y={11} /><Dot x={16} y={21} /></>,
  crossPt: <><path d="M1 15Q12 3 23 15M12 1V22" fill="none" stroke="#111" strokeWidth="1.400" /><Dot x={12} y={9} /></>,
  center: <><circle cx="12" cy="12" r="10" fill="none" stroke="#111" strokeWidth="1.400" /><path d="M12 9 13 11 15 12 13 13 12 15 11 13 9 12 11 11z" fill="#e01010" stroke="#e01010" /></>,
  quad: <><circle cx="12" cy="12" r="9" fill="none" stroke="#111" strokeWidth="1.400" /><Dot x={12} y={3} /><Dot x={12} y={21} /><Dot x={3} y={12} /><Dot x={21} y={12} /></>,
  existPt: <><path d="M12 2V22M2 12H22" stroke="#111" strokeWidth="1.400" /><Dot x={12} y={12} /></>,
  onCurve: <><path d="M4 20 21 3" stroke="#111" strokeWidth="1.400" /><Dot x={7} y={17} /></>,
  onFace: <><path d="M12 22 24 16 20 22z" fill="#888" opacity="0.500" /><path d="M3 5Q12 -1 22 4 15 8 16 18 8 16 2 21 -1 12 3 5z" fill="#b0d8fc" stroke="#3c78c8" /><path d="M22 4Q15 8 16 18L14 17Q12 8 19 3z" fill="#5898e8" /><Dot x={12} y={7} /></>,
  grid: <><path d="M4 1 20 7V24L4 17z" fill="#eee" stroke="#222" strokeWidth="1.400" /><path d="M8 3V19M12 4V21M16 6V22M4 5 20 11M4 9 20 15M4 13 20 19" stroke="#222" /><Dot x={15} y={9} /></>,
};

const Icon = ({ name, className = 'h-6 w-6' }) => (
  <svg viewBox="0 0 24 24" className={`${className} shrink-0 overflow-visible`} aria-hidden="true">{icons[name]}</svg>
);

// ---------- Toolbars ----------
// 'v' is a drop-down arrow, '|' a separator, a leading '*' marks a pressed button

const toolbarRows = [
  [
    ['nx', { label: '启动', dark: true }, 'v', 'new', 'open', 'save', '|', 'cut', 'copy', 'paste', '|', 'undo', 'v', 'redo', '|', 'save', 'v', '|', 'info', '|', { field: '填充曲面' }],
    ['fit', 'v', 'orient', 'v', 'rainbow', 'v', 'clipOrange', 'clipGreen', 'v', 'swatchBar', 'v', '|', 'door', 'doorGo'],
    ['layers', 'wcs', 'v', '|', 'hand', 'palette', '|', 'play', 'v', '|', 'section', 'v', 'measure'],
  ],
  [
    ['plane', 'v', 'extrude', 'revolve', 'hole', 'emboss', 'wrap', 'thicken', '|', 'offset', 'pattern', 'patternGeo', 'mirror', 'unite', 'v', 'trimBody', 'trimSheet', 'split', 'shell', 'moveSheet', '|', 'blend', 'flange', 'chamfer', 'draft', 'polyBody'],
    ['editMove', 'v', 'editBlend', 'v', 'editDelete', 'editCopy', 'v', 'editGroup', 'v', 'editDist', 'v', 'editSelect', 'editFace', 'editEdge', 'v', 'sheetPair', 'sheetTurn'],
    ['fourPoint', 'ruled', 'mesh', 'nSide', 'extend', 'studio', 'sweepSurf', 'book', 'v'],
  ],
  [
    ['assembly', 'layersPlain', 'layers', '|', 'tag', '|', 'bodyCheck', 'editCheck', 'boxCheck', '|', 'abc'],
    ['beamA', 'beamB', 'pick'],
    ['spring', 'springTension', 'coil', '|', 'springCut'],
    ['triangle', 'sheetTable', 'folderPts', 'folderCirc', 'note', 'brush', '|', 'findFit'],
    ['lockBoxes', 'unlockBoxes'],
    ['redCube', 'editDelete', 'editNote', 'extrude', 'boxGhost', 'dimX', 'blend', 'subtract', 'blueWire', 'unite'],
  ],
  [
    ['sketch', 'flag', { label: '完成草图' }, 'profile', 'line', 'arc', 'circle', 'fillet', 'chamferLine', 'rect', 'spline', 'point', 'offsetCurve', 'v', '|', 'trimA', 'trimB', 'corner', '|', 'autoDim', 'v', '|', 'perp', 'sym', 'autoCon', 'v', '|', 'conA', 'conB', 'conC'],
  ],
  [
    ['qCheck', 'qTree', 'qTable', 'axes'],
    ['dimRapid', '|', 'd1', 'd2', 'd3', 'd4', 'd5', 'd6', 'd7', 'd8', 'd9', 'd10', 'd11', '|', 'radA', 'radB', '|', 'diaA', 'diaB', 'back'],
  ],
];

const selectionTools = ['links', '|', 'filterBack', 'filter', 'v', 'undoTarget', 'findTree', '|', 'selRect', 'v', '|', '*snapFace', 'blueBox', '|', '*snapPts', '*endPoint', '*midPoint', 'sCurve', '*poles', 'crossPt', '*center', 'quad', '*existPt', '*onCurve', 'onFace', '|', 'grid'];

const Arrow = () => <svg viewBox="0 0 5 3" className="h-[3px] w-[5px]" aria-hidden="true"><path d="M0 0H5L2.500 3z" fill="#000" /></svg>;

const Tool = ({ item }) => {
  if (item === '|') return <span className="mx-[2px] h-[30px] w-[2px] shrink-0 border-l border-[#b0b0b0] bg-white" />;
  if (item === 'v') return <button type="button" aria-label="more" className="flex h-6 w-3 shrink-0 items-center justify-center"><Arrow /></button>;
  if (item.field) {
    return (
      <label className="ml-[2px] flex h-[22px] w-[110px] shrink-0 items-center border border-[#a0a0a0] bg-white pr-1">
        <input aria-label="command" defaultValue={item.field} className="w-0 flex-1 bg-white pl-[2px] text-xs text-black outline-none" />
        <svg viewBox="0 0 16 16" className="h-4 w-4" fill="none" stroke="#444" aria-hidden="true">
          <circle cx="10" cy="6" r="4.500" /><circle cx="10" cy="6" r="2" /><path d="M7 9 2 14 1 13 6 8" />
        </svg>
      </label>
    );
  }
  if (item.label) {
    return <button type="button" className={`shrink-0 text-left text-xs ${item.dark ? 'w-6 text-black' : 'w-[51px] text-[#8a8a8a]'}`}>{item.label}</button>;
  }
  const pressed = item[0] === '*';
  const name = pressed ? item.slice(1) : item;
  return (
    <button
      type="button"
      aria-label={name}
      className={`flex h-[30px] shrink-0 items-center justify-center ${name === 'filter' ? 'w-7' : 'w-[31px]'} ${pressed ? 'rounded-[3px] border border-[#666] bg-white' : ''}`}
    >
      <Icon name={name} />
    </button>
  );
};

const Grip = () => <span className="ml-[3px] mr-[3px] h-[22px] w-[2px] shrink-0 border-l-2 border-dotted border-[#a8a8a8]" />;

const Toolbar = ({ items }) => (
  <div className="flex h-full shrink-0 items-center border-b border-r border-[#b4b4b4] border-t border-t-[#f0f0f0]">
    <Grip />
    {items.map((item, i) => <Tool key={i} item={item} />)}
    <button type="button" aria-label="toolbar options" className="flex h-6 w-[13px] items-end justify-center pb-[5px]"><Arrow /></button>
  </div>
);

// ---------- Title and menu ----------

const menus = [
  ['文件', 'F'], ['编辑', 'E'], ['视图', 'V'], ['插入', 'S'], ['格式', 'R'], ['工具', 'T'], ['装配', 'A'], ['信息', 'I'], ['分析', 'L'],
  ['首选项', 'P'], ['窗口', 'O'], ['GC工具箱'], ['星空外挂 V6.935F'], ['帮助', 'H'],
];

const TitleBar = () => (
  <header className="flex h-[26px] shrink-0 items-center border-t-[3px] border-[#55585f] bg-[#1c1c1c] pl-1 text-white">
    <Icon name="nx" className="h-4 w-4" />
    <h1 className="ml-[3px] text-[13px] leading-5">YC - 建模 - [24_igs.prt]</h1>
    <span className="ml-auto mr-7 font-['Open_Sans'] text-[13px] font-extrabold leading-5">SIEMENS</span>
    <div className="flex gap-1 pb-px">
      <button type="button" aria-label="minimize" className="flex h-[18px] w-[18px] items-end rounded-[2px] border border-[#777] bg-gradient-to-b from-[#666] to-[#333] p-1"><span className="h-[3px] w-[7px] bg-white" /></button>
      <button type="button" aria-label="restore" className="flex h-[18px] w-[18px] items-center justify-center rounded-[2px] border border-[#777] bg-gradient-to-b from-[#666] to-[#333]">
        <svg viewBox="0 0 10 10" className="h-[10px] w-[10px]" fill="none" stroke="#fff" strokeWidth="1.300"><path d="M3 3V1H9V6H7M1 4H7V9H1z" /></svg>
      </button>
      <button type="button" aria-label="close" className="flex h-[18px] w-[18px] items-center justify-center rounded-[2px] border border-[#f09080] bg-gradient-to-b from-[#f08068] to-[#d83010]">
        <svg viewBox="0 0 10 10" className="h-[10px] w-[10px]" stroke="#fff" strokeWidth="2"><path d="M1 1 9 9M9 1 1 9" /></svg>
      </button>
    </div>
  </header>
);

const MdiButton = ({ label, d }) => (
  <button type="button" aria-label={label} className="flex h-4 w-[18px] items-center justify-center rounded-[3px] border border-[#777] bg-[#f6f6f6]">
    <svg viewBox="0 0 10 10" className="h-[10px] w-[10px]" fill="none" stroke="#555" strokeWidth="1.600"><path d={d} /></svg>
  </button>
);

const MenuBar = () => (
  <nav className="flex h-[23px] shrink-0 items-center border-b border-[#bdbdbd] bg-[#e6e6e6] pr-px">
    <Grip />
    <svg viewBox="0 0 24 24" className="h-4 w-4" aria-hidden="true"><path d="M3 5 10 2 15 5V10L22 13V18L12 23 3 18z" fill="url(#gDeep)" stroke="#1c48b0" strokeWidth="1.500" /></svg>
    <ul className="ml-[5px] flex gap-[13px] text-xs leading-4 text-black">
      {menus.map(([text, key]) => {
        const [cjk, latin] = text.split(' ');
        return (
          <li key={text} className={text === '首选项' ? 'ml-3' : ''}>
            <a href="#menu" className="whitespace-nowrap">
              {cjk.startsWith('GC') ? <><span className="font-['Liberation_Mono'] text-[10px]">GC</span>工具箱</> : cjk}
              {latin && <span className="ml-[6px] font-['Liberation_Mono'] text-[10px]">{latin}</span>}
              {key && <span className="font-['Liberation_Mono'] text-[10px]">(<u>{key}</u>)</span>}
            </a>
          </li>
        );
      })}
    </ul>
    <div className="ml-auto flex gap-px">
      <MdiButton label="minimize document" d="M2 8H8" />
      <MdiButton label="restore document" d="M3 3V1H9V6H7M1 4H7V9H1z" />
      <MdiButton label="close document" d="M2 2 8 8M8 2 2 8" />
    </div>
  </nav>
);

const Dropdown = ({ label, value, className }) => (
  <div className={`relative flex h-4 shrink-0 items-center overflow-hidden rounded-[3px] border border-[#555] bg-white ${className}`}>
    <select aria-label={label} defaultValue={value} className="w-full appearance-none bg-white text-xs leading-[14px] text-black outline-none">
      <option>{value}</option>
    </select>
    <span className="pointer-events-none absolute inset-y-0 right-0 flex w-[17px] items-center justify-center bg-gradient-to-b from-[#d8ecff] to-[#4888d0]">
      <svg viewBox="0 0 10 6" className="h-[7px] w-[11px]"><path d="M0 0H10L5 6z" fill="#111" /></svg>
    </span>
  </div>
);

// ---------- Resource bar ----------

const tabs = [
  { name: 'assembly navigator', art: <><Cube {...gold} transform="scale(.5)" /><Cube {...gold} transform="translate(5 3) scale(.45)" /><path d="M3 14V24M3 19H9M14 12H23" stroke="#1010a0" strokeWidth="1.300" /><Cube {...gold} transform="translate(11 14) scale(.42)" /></> },
  { name: 'constraint navigator', art: <><path d="M2 0V10L9 5zM18 0V10L11 5z" fill="#1818d0" /><path d="M10 0V24" stroke="#111" strokeDasharray="2 1" /><path d="M1 14H8V22H1z" fill="#ffe818" stroke="#a08000" /><path d="M12 13 21 22H12z" fill="#c81010" /></> },
  { name: 'part navigator', active: true, art: <><path d="M1 3Q5 0 10 3V10Q5 13 1 10z" fill="#d888b8" stroke="#801868" /><path d="M13 9H22M4 13V24M4 18H10" stroke="#201070" strokeWidth="1.300" /><circle cx="16" cy="18" r="4.500" fill="none" stroke="#901870" strokeWidth="1.300" /><circle cx="16" cy="18" r="1.500" fill="#901870" /></> },
  { name: 'reuse library', art: <><path d="M0 5 7 1H23L17 5z" fill="#fff" stroke="#777" strokeWidth="0.500" /><path d="M0 5H5V22H0z" fill="#f08828" stroke="#904000" /><path d="M6 5H11V22H6z" fill="#38c828" stroke="#106010" /><path d="M12 5H17L23 1V18L17 22H12z" fill="#2898f0" stroke="#104890" /><path d="M17 5V22" stroke="#104890" /></> },
  { name: 'web information', gap: true, art: <><circle cx="8" cy="15" r="8" fill="#1c80d8" stroke="#0c4890" /><path d="M7 10H9V12H7zM6 13H9V19H11V20H6V19H7V14H6z" fill="#fff" /><path d="M8 1Q21 1 23 14M8 5Q17 5 19 14" fill="none" stroke="#2868c0" strokeWidth="2" /></> },
  { name: 'browser', gap: true, art: <><path d="M3 1H14L20 7V23H3z" fill="#fff" stroke="#2858c8" strokeWidth="1.500" /><path d="M14 1V7H20" fill="none" stroke="#2858c8" /><circle cx="11.500" cy="14" r="5.500" fill="#2c90d8" /><path d="M7 12Q11 16 10 19 6 17 7 12M12 9 17 13 14 18z" fill="#28a030" /></> },
  { name: 'history', gap: true, art: <><circle cx="12" cy="12" r="10.500" fill="#d8e8fa" stroke="#667" strokeWidth="2" /><path d="M12 4V12H19" fill="none" stroke="#111" strokeWidth="1.800" /></> },
  { name: 'system materials', art: <><path d="M1 1H9V22H1z" fill="url(#gSpectrum)" /><path d="M11 6 20 22" stroke="#111" strokeWidth="2.500" /><path d="M10 1V9M6 5H14" stroke="#fff" strokeWidth="2" /></> },
  { name: 'process studio', art: <><path d="M2 3H8V20H2z" fill="#3880e0" stroke="#1848a0" strokeDasharray="2 1" /><path d="M9 6H23L12 12 22 13" fill="none" stroke="#3880e0" strokeWidth="1.500" /><path d="M0 21H9" stroke="#e8c020" strokeWidth="2" /><path d="M11 6 20 22" stroke="#111" strokeWidth="2.500" /><path d="M10 1V9M6 5H14" stroke="#fff" strokeWidth="2" /></> },
  { name: 'manufacturing wizards', art: <><path d="M8 3 17 1 21 5 17 6 14 4 12 9" fill="#667" stroke="#333" /><path d="M12 8 6 18 9 21 15 10z" fill="#ddd" stroke="#444" /><path d="M2 15Q6 12 8 16L15 19Q18 17 17 22 12 24 10 21L4 19z" fill="#889" stroke="#334" /><circle cx="4" cy="21" r="3" fill="#f08818" /></> },
  { name: 'roles', art: <><path d="M1 4 7 1V21L1 24z" fill="#eee" stroke="#333" /><path d="M8 2H22V18H8z" fill="#fff" stroke="#333" /><path d="M10 4H20V13H10z" fill="#d82018" /><path d="M12 4H18L17 9 19 13H11L13 9z" fill="#58a8f8" /></> },
];

const ResourceBar = () => (
  <aside className="flex w-[31px] shrink-0 flex-col items-end border-r border-[#808080] bg-gradient-to-r from-[#bdbdbd] to-[#a6a6a6]">
    <button type="button" aria-label="settings" className="flex h-[45px] w-full justify-center pt-2">
      <svg viewBox="0 0 16 16" className="h-[15px] w-[15px]" fill="none" stroke="#222"><circle cx="8" cy="8" r="5" strokeWidth="1.500" /><circle cx="8" cy="8" r="6.500" strokeWidth="1.500" strokeDasharray="2 3" /><circle cx="8" cy="8" r="0.800" /></svg>
    </button>
    {tabs.map((tab) => (
      <button
        key={tab.name}
        type="button"
        aria-label={tab.name}
        className={`mb-[2px] flex h-10 items-center rounded-l-[3px] border border-r-0 border-[#666] pl-px ${tab.active ? 'w-7 bg-[#eeeeee]' : 'w-[26px] bg-gradient-to-b from-[#e4e4e4] to-[#cfcfcf]'} ${tab.gap ? 'mt-3' : ''}`}
      >
        <svg viewBox="0 0 24 24" className="h-6 w-6 shrink-0" aria-hidden="true">{tab.art}</svg>
      </button>
    ))}
  </aside>
);

// ---------- Part navigator ----------

const TreeIcon = ({ type }) => (
  <svg viewBox="0 0 16 16" className="h-4 w-4 shrink-0" aria-hidden="true">
    {type === 'clock' && <><circle cx="8" cy="8" r="6.800" fill="#d8e8fa" stroke="#667" strokeWidth="1.500" /><path d="M8 3V8H12" fill="none" stroke="#111" strokeWidth="1.200" /></>}
    {type === 'views' && <><path d="M1 4 7 1 13 4V11L7 14 1 11zM1 4 13 11M13 4 1 11M7 1V14" fill="none" stroke="#109050" strokeWidth="1.200" /><path d="M9 14 15 12" stroke="#e02010" strokeWidth="2" /></>}
    {type === 'camera' && <><path d="M1 5 11 2 13 4V13L2 14z" fill="#fff" stroke="#e03010" strokeWidth="1.300" /><circle cx="7" cy="8" r="2.800" fill="#6888d8" stroke="#113" /><path d="M11 7H14V12H12z" fill="#222" /></>}
    {type === 'folder' && <><path d="M1 3H6L7 5H13V14H1z" fill="#f8d060" stroke="#906000" /><path d="M3 8H16L13 14H1z" fill="#fbb828" stroke="#906000" /></>}
    {type === 'body' && <><path d="M3 11 8 9H12L16 12V14L10 16 3 14z" fill="#4880e0" stroke="#1c40a0" /><path d="M3 11 8 9H12L16 12 10 13z" fill="#b8d4fc" /><path d="M8 5H13V11H9z" fill="#a8c8f8" stroke="#3058b0" /><path d="M8 1.500H14M8 0V3M13.500 0V3" stroke="#111" /><circle cx="4.800" cy="4.800" r="3.800" fill="#fff" stroke="#d01818" strokeWidth="1.500" /><path d="M2 7 8 2" stroke="#d01818" strokeWidth="1.500" /></>}
    {type === 'fill' && <><path d="M0 8Q5 2 9 2L15 7Q11 10 8 15z" fill="#3848b8" stroke="#182080" /><path d="M4 8Q7 5 10 4L13 8 8 12z" fill="#f8a828" /></>}
    {type === 'check' && <path d="M3 8 6 12 13 3" fill="none" stroke="#10b030" strokeWidth="2.800" />}
  </svg>
);

const treeRows = [
  { icon: 'clock', text: '历史记录模式', line: 'M9.500 10V20M9.500 10H18' },
  { icon: 'views', text: '模型视图', sign: '+', line: 'M9.500 0V20M15 10H18' },
  { icon: 'camera', text: '摄像机', sign: '+', tick: true, line: 'M9.500 0V20M15 10H18' },
  { icon: 'folder', text: '模型历史记录', sign: '−', line: 'M9.500 0V8M15 10H18' },
  ...[1, 2, 3, 4].map((n) => ({ icon: 'body', text: '体', num: n, child: true, line: 'M28.500 0V20M28.500 10H38' })),
  { icon: 'fill', text: '填充曲面', num: 6, child: true, bold: true, line: 'M28.500 0V10M28.500 10H38' },
];

const TreeName = ({ row }) => (
  <div className="flex h-[19px] items-center">
    <span className={`relative h-[19px] shrink-0 ${row.child ? 'w-10' : 'w-[18px]'}`}>
      <svg className="absolute h-[20px] w-full" aria-hidden="true"><path d={row.line} stroke="#999" fill="none" strokeDasharray="1 1" /></svg>
      {row.sign && (
        <button type="button" aria-label={`toggle ${row.text}`} className="absolute left-[4px] top-[5px] h-[9px] w-[9px] rounded-[2px] border border-[#888] bg-white">
          <svg viewBox="0 0 7 7" className="h-[7px] w-[7px]" stroke="#111"><path d={row.sign === '+' ? 'M1 3.500H6M3.500 1V6' : 'M1 3.500H6'} /></svg>
        </button>
      )}
    </span>
    {row.child && (
      <span className="relative mr-px h-3 w-3 shrink-0">
        <input type="checkbox" defaultChecked aria-label={`${row.text} ${row.num}`} className="block h-3 w-3 appearance-none border border-black bg-white" />
        <svg viewBox="0 0 12 12" className="pointer-events-none absolute inset-0 h-3 w-3"><path d="M3 6 5 9 10 3" fill="none" stroke="#10b030" strokeWidth="2.200" /></svg>
      </span>
    )}
    {row.tick && <TreeIcon type="check" />}
    <TreeIcon type={row.icon} />
    <span className={`ml-[3px] whitespace-nowrap leading-[19px] ${row.bold ? 'text-[13px] font-bold text-[#222]' : 'text-xs text-[#333]'}`}>
      {row.text}
      {row.num && <span className={`ml-2 font-['Liberation_Mono'] ${row.bold ? 'text-xs' : 'text-[10px]'}`}>({row.num})</span>}
    </span>
  </div>
);

const PartTable = () => (
  <div className="ml-[7px] mr-2 min-h-0 flex-1 overflow-hidden border border-[#666] bg-white px-px">
    <table className="w-full table-fixed border-collapse text-left text-xs">
      <colgroup>
        <col className="w-[199px]" /><col className="w-[100px]" /><col className="w-[100px]" /><col />
      </colgroup>
      <thead>
        <tr className="h-4 border-b border-[#888] bg-gradient-to-b from-[#f6f8f8] to-[#d4d6d8] leading-4 text-[#222]">
          <th className="border-r border-[#aaa] pl-[6px] font-normal">
            名称
            <svg viewBox="0 0 10 6" className="ml-4 mb-[2px] inline h-[6px] w-[10px]"><path d="M0 6H10L5 0z" fill="#111" /></svg>
          </th>
          <th className="border-r border-[#aaa] pl-[6px] font-normal">最新</th>
          <th className="border-r border-[#aaa] pl-[6px] font-normal">附注</th>
          <th aria-label="empty" />
        </tr>
      </thead>
      <tbody>
        {Array.from({ length: 40 }, (_, i) => treeRows[i] || {}).map((row, i) => (
          <tr key={i} className="h-5 border-b border-[#e2e2e2] odd:bg-white even:bg-[#f6f6f6]">
            <td className="border-r border-[#e2e2e2] p-0">{row.text && <TreeName row={row} />}</td>
            <td className="border-r border-[#e2e2e2] p-0 pl-1">{row.child && <TreeIcon type="check" />}</td>
            <td className="border-r border-[#e2e2e2] p-0" />
            <td className="p-0" />
          </tr>
        ))}
      </tbody>
    </table>
  </div>
);

const Navigator = () => (
  <section className="flex w-[439px] shrink-0 flex-col border-r-2 border-t border-[#888] bg-[#ebebeb] pb-[5px]">
    <div className="flex h-[30px] shrink-0 items-center justify-between pl-3 pr-[13px]">
      <h2 className="text-[13px] font-bold leading-[18px] text-black">部件导航器</h2>
      <button type="button" aria-label="maximize panel" className="mt-[2px] h-3 w-[13px] border border-t-2 border-black" />
    </div>
    <PartTable />
    <div className="ml-[7px] mr-2 flex h-3 shrink-0 items-center gap-1">
      <span className="h-[2px] flex-[168] border-b border-[#b8b8b8] bg-white" />
      <span className="h-[6px] w-[78px] border-b border-r border-[#999] bg-[#d0d0d0]" />
      <span className="h-[2px] flex-[168] border-b border-[#b8b8b8] bg-white" />
    </div>
    {['相依性', '细节', '预览'].map((title) => (
      <button key={title} type="button" className="ml-[7px] mr-2 flex h-[23px] shrink-0 items-center border-b border-r border-[#a0a0a0] bg-gradient-to-b from-[#f8f9f9] to-[#d2d4d6] text-left text-[13px] font-bold leading-5 text-black">
        <span className="flex-1 pl-[6px]">{title}</span>
        <span className="flex h-full w-[23px] items-center justify-center border-l border-[#999]">
          <svg viewBox="0 0 12 9" className="h-[9px] w-3" fill="none" stroke="#555" strokeWidth="2.800"><path d="M1 1 6 7 11 1" /></svg>
        </span>
      </button>
    ))}
  </section>
);

// ---------- Model ----------

const C = { k: '#000', r: '#f00', g: '#0f0', b: '#00f', w: '#fff', m: '#f0f', y: '#ff0', c: '#0ff' };

// Smooth path through points, midpoints joined by quadratics
const curve = (pts) => {
  let d = `M${pts[0][0]} ${pts[0][1]}`;
  for (let i = 1; i < pts.length - 1; i += 1) {
    const [x, y] = pts[i];
    const [nx, ny] = pts[i + 1];
    const last = i === pts.length - 2;
    d += `Q${x} ${y} ${last ? nx : (x + nx) / 2} ${last ? ny : (y + ny) / 2}`;
  }
  if (pts.length === 2) d += `L${pts[1][0]} ${pts[1][1]}`;
  return d;
};

// Each band covers everything under its upper edge; the next one is painted over it
const leftBands = [
  ['w', [[30, 198], [300, 236], [420, 250], [500, 262], [560, 285], [600, 320], [620, 350], [627, 400]]],
  ['m', [[30, 222], [300, 262], [430, 281], [520, 297], [570, 325], [595, 355], [602, 400]]],
  ['y', [[30, 242], [300, 285], [430, 303], [510, 317], [555, 343], [583, 400]]],
  ['c', [[30, 260], [300, 302], [440, 321], [500, 332], [540, 355], [568, 400]]],
  ['k', [[30, 278], [300, 317], [440, 336], [490, 345], [530, 368], [552, 400]]],
  ['r', [[30, 291], [440, 348], [480, 356], [515, 375], [534, 405]]],
  ['g', [[30, 305], [440, 360], [470, 366], [500, 380], [520, 405]]],
  ['b', [[30, 316], [440, 368], [475, 376], [500, 390], [515, 410]]],
  ['w', [[30, 323], [440, 376], [470, 382], [495, 395], [508, 412]]],
  ['m', [[30, 334], [440, 388], [470, 396], [492, 412]]],
  ['y', [[30, 342], [440, 396], [480, 413]]],
  ['c', [[30, 348], [440, 402], [474, 415]]],
  ['k', [[30, 353], [440, 407], [468, 416]]],
  ['r', [[30, 360], [440, 412], [464, 420]]],
  ['g', [[30, 370], [460, 425]]],
];

const rightBands = [
  ['g', [[1850, 74], [1660, 130], [1520, 172], [1460, 195], [1390, 213], [1320, 240], [1290, 254], [1330, 268], [1360, 290], [1390, 322]]],
  ['b', [[1850, 96], [1660, 150], [1520, 190], [1460, 208], [1405, 235], [1388, 265], [1392, 300], [1405, 325]]],
  ['w', [[1870, 112], [1520, 208], [1480, 220], [1435, 240], [1412, 270], [1414, 325]]],
  ['m', [[1890, 122], [1520, 228], [1480, 240], [1445, 262], [1428, 290], [1430, 325]]],
  ['y', [[1900, 138], [1520, 245], [1480, 260], [1455, 285], [1447, 325]]],
  ['c', [[1910, 150], [1530, 255], [1490, 273], [1463, 298], [1458, 325]]],
  ['k', [[1920, 160], [1540, 264], [1500, 281], [1475, 302], [1468, 325]]],
  ['r', [[1925, 170], [1550, 274], [1510, 290], [1484, 325]]],
  ['g', [[1925, 179], [1560, 284], [1515, 300], [1494, 325]]],
  ['b', [[1925, 184], [1560, 292], [1500, 325]]],
  ['w', [[1930, 188], [1560, 298], [1506, 328]]],
  ['m', [[1930, 196], [1550, 309], [1518, 328]]],
  ['y', [[1930, 201], [1550, 315], [1528, 330]]],
  ['c', [[1930, 205], [1534, 330]]],
  ['k', [[1930, 209], [1540, 330]]],
  ['r', [[1930, 214], [1548, 332]]],
];

// Columns: left end, left seam, centre, inner right, right seam, right end
const frontX = [360, 790, 960, 1100, 1235, 1700];
const frontBands = [
  ['b', [550, 434, 450, 402, 366, 412]],
  ['w', [563, 445, 461, 418, 380, 428]],
  ['m', [583, 460, 472, 430, 395, 446]],
  ['y', [597, 472, 482, 443, 407, 458]],
  ['c', [609, 480, 489, 452, 421, 472]],
  ['k', [618, 487, 495, 461, 431, 483]],
  ['r', [628, 496, 503, 471, 442, 491]],
  ['g', [636, 505, 509, 480, 451, 501]],
  ['b', [645, 513, 515, 488, 460, 510]],
  ['w', [650, 518, 518, 493, 467, 516]],
  ['m', [657, 524, 520, 499, 477, 527]],
  ['y', [663, 530, 522, 504, 484, 532]],
  ['c', [668, 535, 523, 508, 490, 537]],
  ['k', [672, 540, 524, 511, 496, 542]],
  ['r', [678, 546, 525, 514, 502, 548]],
  ['g', [688, 552, 526, 516, 508, 553]],
  ['b', [700, 560, 528, 522, 514, 560]],
];

const backOutline = 'M61 378Q64 320 95 268Q140 180 250 176Q400 190 600 218L690 228Q760 242 830 265Q900 286 960 281Q1030 278 1080 260Q1140 238 1200 208Q1260 178 1320 160L1640 66Q1690 48 1750 60Q1830 80 1868 130Q1905 180 1905 220L1550 328L1460 335L1400 330L1160 370L1040 392L700 390L560 400L455 425z';
const frontOutline = 'M230 498L300 472L400 440L520 404L600 386L650 378L710 375L960 386L1050 380L1160 362L1240 348L1300 330L1360 317L1460 318L1720 350L1795 362Q1735 385 1705 412Q1670 440 1640 475Q1612 510 1615 567L1225 520L1110 515L960 520L860 540L800 555L432 667Q425 600 365 545Q330 505 230 498z';

// Stripes on the inner walls seen through the open ends
const InnerStripes = ({ colors, x, y, step, slope, width }) => (
  colors.split('').map((key, i) => {
    const top = y + i * step;
    return <path key={i} d={`M${x} ${top}L${x + width} ${top + slope * width}V${top + slope * width + 60}L${x} ${top + 60}z`} fill={C[key]} />;
  })
);

const Model = () => (
  <svg viewBox="470 253 1126 584" className="absolute inset-0 h-full w-full" aria-label="model" shapeRendering="crispEdges">
    <defs>
      <clipPath id="back"><path d={backOutline} /></clipPath>
      <clipPath id="front"><path d={frontOutline} /></clipPath>
      <clipPath id="endL"><path d="M93 627Q92 570 140 522Q180 495 230 498Q330 505 365 548z" /></clipPath>
      <clipPath id="endR"><path d="M1937 468Q1930 400 1850 366Q1800 358 1770 372L1640 438z" /></clipPath>
    </defs>
    <g transform="translate(540 450) scale(0.33333)">
      <g clipPath="url(#back)">
        <path d="M0 0H2000V700H0z" fill={C.r} />
        <path d="M0 100H620L600 400H0z" fill={C.b} />
        <path d="M345 214L390 200L500 207L630 225L592 242Q640 268 690 288Q720 310 718 328Q700 350 710 365L720 395H650Q665 320 620 285Q580 255 540 250L430 232z" fill={C.g} />
        <path d="M540 250Q640 285 655 330V395H600V300z" fill={C.b} />
        {leftBands.map(([key, pts], i) => <path key={i} d={`${curve(pts)}L${pts[pts.length - 1][0]} 500L0 500z`} fill={C[key]} />)}
        <path d="M690 238Q740 236 820 262Q900 284 958 290Q955 308 900 307Q840 300 780 275Q730 255 690 240z" fill={C.k} />
        <path d="M810 365Q840 354 920 365L955 372L930 380L840 376z" fill={C.k} />
        <path d="M630 228Q720 250 800 297T1000 376" fill="none" stroke={C.g} strokeWidth="6" />
        <path d="M1075 270L1075 255L1140 230L1200 200L1192 226L1240 245L1238 260L1230 275L1205 290Q1150 318 1100 318Q1070 312 1075 270z" fill={C.g} />
        <path d="M1010 370Q1060 345 1110 320" fill="none" stroke={C.g} strokeWidth="7" />
        <path d="M1290 180Q1380 190 1400 178L1560 125L1765 66L1720 30H1600L1290 150z" fill={C.k} />
        <path d="M1210 200L1320 160L1400 134L1440 124L1340 172L1300 182z" fill={C.r} />
        {rightBands.map(([key, pts], i) => <path key={i} d={`${curve(pts)}L1560 400L2000 400L2000 ${pts[0][1] - 40}z`} fill={C[key]} />)}
        <path d="M1218 240Q1280 195 1355 165" fill="none" stroke={C.g} strokeWidth="7" />
        <path d="M1230 328Q1260 306 1320 308L1400 316L1300 335z" fill={C.k} />
      </g>
      <g fill="none" strokeDasharray="6 6" strokeWidth="3">
        <path d="M280 178Q400 190 600 218L690 226Q760 242 830 265Q900 286 960 281" stroke="#00f" />
        <path d="M286 177Q400 190 600 218L690 226Q760 242 830 265Q900 286 960 281" stroke="#fff" strokeDasharray="3 9" />
        <path d="M1030 278Q1140 238 1200 208Q1260 178 1320 160" stroke="#fff" />
        <path d="M1036 276Q1140 238 1200 208Q1260 178 1320 160" stroke="#00f" strokeDasharray="3 9" />
      </g>
      <g fill="none" stroke="#111" strokeWidth="3">
        <path d="M61 378Q64 320 95 268Q140 180 250 176" />
        <path d="M1695 52Q1830 75 1868 130Q1905 180 1905 220L1550 328" />
        <path d="M61 378L455 425" strokeDasharray="6 3" />
        <g strokeWidth="2"><path d="M660 222Q580 230 520 280Q455 340 452 420" /><path d="M1350 165Q1440 170 1490 225Q1530 270 1533 325" /></g>
      </g>
      <g clipPath="url(#endL)">
        <path d="M0 450H500V700H0z" fill={C.y} />
        <InnerStripes colors="mwbgrkcymwbgrkcymwb" x={80} y={556} step={4} slope={-0.27} width={320} />
      </g>
      <path d="M93 627Q92 570 140 522Q180 495 230 498" fill="none" stroke="#111" strokeWidth="3" />
      <g clipPath="url(#endR)">
        <path d="M1600 300H2000V500H1600z" fill={C.c} />
        <InnerStripes colors="ymwbgrkcymw" x={1660} y={355} step={8} slope={0.12} width={300} />
      </g>
      <path d="M1800 362Q1900 362 1937 468L1665 438" fill="none" stroke="#111" strokeWidth="3" />
      <g clipPath="url(#front)">
        <path d="M200 300H1800V700H200z" fill={C.g} />
        <path d="M220 512L400 458L560 402L640 386L600 370L400 430L220 490z" fill={C.b} />
        <path d="M350 502L470 452Q520 430 560 408L650 388L720 384L960 390L1050 397L1045 412L960 425Q880 422 800 420Q740 414 650 432L530 465z" fill={C.r} />
        <path d="M715 395L760 387L860 395L970 402V410L850 411L740 404z" fill={C.k} />
        <path d="M1240 346Q1300 330 1380 326L1460 340L1760 378L1740 400Q1400 350 1280 350z" fill={C.r} />
        <path d="M1320 330L1370 317H1460L1800 350L1760 378Q1500 350 1400 328z" fill={C.k} />
        <path d="M1320 322L1375 326" stroke={C.g} strokeWidth="5" />
        {frontBands.map(([key, ys], i) => (
          <path key={i} d={`${curve([[200, ys[0] + 42], ...ys.map((y, j) => [frontX[j], y])])}V760H200z`} fill={C[key]} />
        ))}
      </g>
      <g fill="none" strokeWidth="4">
        <path d="M210 500L300 472L400 440L520 404L600 386L650 378L710 375L960 386L1050 380L1160 362L1240 348" stroke="#fff" />
        <path d="M210 500L300 472L400 440L520 404L600 386L650 378L710 375L960 386L1050 380L1160 362L1240 348" stroke="#f0f" strokeDasharray="6 12" />
        <path d="M216 498L300 472L400 440L520 404L600 386L650 378L710 375L960 386L1050 380L1160 362L1240 348L1320 325" stroke="#00a" strokeDasharray="6 9" strokeWidth="3" />
        <path d="M800 555L860 540L960 521L1110 515L1225 520" stroke="#0f0" />
      </g>
      <g fill="none" stroke="#111" strokeWidth="3">
        <path d="M230 498Q330 505 365 545Q425 600 432 667L800 555" />
        <path d="M1795 362Q1735 385 1705 412Q1670 440 1640 475Q1612 510 1615 567L1225 520" />
        <g strokeWidth="2"><path d="M645 390Q720 410 770 475Q795 510 798 552" /><path d="M1360 328Q1290 345 1250 410Q1225 450 1225 520" /></g>
      </g>
      <path d="M985 258Q992 280 996 330L998 410L990 408L984 320Q980 280 985 258z" fill="#1c48e8" />
      <path d="M996 425L900 403L872 410L900 416z" fill="#d8a8a0" stroke="#fff" />
      <path d="M990 425L920 440L884 458L920 456z" fill="#b8d8b0" stroke="#fff" />
    </g>
    <g fontFamily="Open Sans" fontSize="13" shapeRendering="auto">
      <text x="873" y="535" fill="#3058f0">ZC</text>
      <text x="832" y="583" fill="#c86868">XC</text>
      <text x="835" y="616" fill="#58a058">YC</text>
    </g>
    <g shapeRendering="auto">
      <path d="M490 768 503 763 517 766V784L504 789 490 786z" fill="#cfcfcf" fillOpacity="0.800" stroke="#b0b0b0" />
      <path d="M490 768 504 771V789M504 771 517 766M503 763V780" fill="none" stroke="#b0b0b0" />
      <path d="M519 784 494 782" stroke="#e0a0a0" strokeWidth="2" />
      <path d="M520 785 517 756" stroke="#1038e8" strokeWidth="2.500" /><path d="M514 761 517 752 521 761z" fill="#1038e8" />
      <path d="M519 786 504 790" stroke="#208820" strokeWidth="2.500" /><path d="M497 791 505 787V793z" fill="#208820" />
      <circle cx="521" cy="786" r="4" fill="#ececec" stroke="#aaa" strokeWidth="0.500" />
      <g fontFamily="Open Sans" fontSize="11">
        <text x="513" y="751" fill="#3058f0">Z</text>
        <text x="487" y="785" fill="#e06060">X</text>
        <text x="490" y="798" fill="#30a030">Y</text>
      </g>
    </g>
  </svg>
);

const Watermark = () => (
  <div className="absolute bottom-3 right-[26px] flex items-center gap-2 text-[#f3f4f6]">
    <svg viewBox="0 0 72 82" className="h-[82px] w-[72px]" aria-hidden="true">
      <path d="M36 0 52 9Q58 14 56 28L36 17Q26 12 14 13z" fill="#cfe8f6" />
      <path d="M0 21 13 14Q26 12 35 18L16 29Q6 34 0 44z" fill="#b4dcf4" />
      <path d="M51 8 72 20V34Q66 46 56 51V29Q56 16 51 8z" fill="#88ccf0" />
      <path d="M0 45Q6 34 15 31V52Q16 66 22 74L0 61z" fill="#9ad2f0" />
      <path d="M72 36V61L62 67Q48 70 37 64L57 52Q68 46 72 36z" fill="#74bce6" />
      <path d="M17 53 36 64Q48 70 60 68L36 82 22 74Q17 64 17 53z" fill="#74c6f0" />
      <path d="M36 22 52 31 36 40 20 31z" fill="#a8d8f2" />
      <path d="M20 32 35 41V59L20 50z" fill="#9ad2f0" />
      <path d="M52 32 37 41V59L52 50z" fill="#74bce6" />
    </svg>
    <div>
      <p className="text-[40px] font-bold leading-[56px]">3D世界网</p>
      <p className="font-['DejaVu_Sans',sans-serif] text-base font-bold leading-5">WWW.3DSJW.COM</p>
    </div>
  </div>
);

export default function App() {
  return (
    <div className="flex h-screen flex-col overflow-hidden bg-[#cbcbcb] font-['Noto_Sans_CJK_SC',sans-serif]">
      <Gradients />
      <TitleBar />
      <MenuBar />
      <div className="shrink-0 border-b-2 border-[#989898] bg-gradient-to-b from-[#e4e4e4] to-[#cbcbcb]">
        {toolbarRows.map((row, i) => (
          <div key={i} className="flex h-[34px]">
            {row.map((items, j) => <Toolbar key={j} items={items} />)}
          </div>
        ))}
      </div>
      <div className="flex h-8 shrink-0 items-center border-b border-[#aaa] bg-gradient-to-b from-[#c8c8c8] to-[#dcdcdc] pl-[6px]">
        <Dropdown label="selection filter" value="没有选择过滤器" className="w-[113px]" />
        <Dropdown label="selection scope" value="整个装配" className="ml-[9px] mr-1 w-[119px]" />
        {selectionTools.map((item, i) => <Tool key={i} item={item} />)}
        <button type="button" aria-label="toolbar options" className="ml-auto flex h-6 w-[11px] items-end justify-center pb-[5px]"><Arrow /></button>
      </div>
      <div className="flex min-h-0 flex-1">
        <ResourceBar />
        <Navigator />
        <main className="relative flex-1 overflow-hidden bg-gradient-to-b from-[#b3b4b6] from-0% via-[#d8d9db] via-50% to-[#e6e7e9] to-75%">
          <Model />
          <Watermark />
        </main>
      </div>
    </div>
  );
}
